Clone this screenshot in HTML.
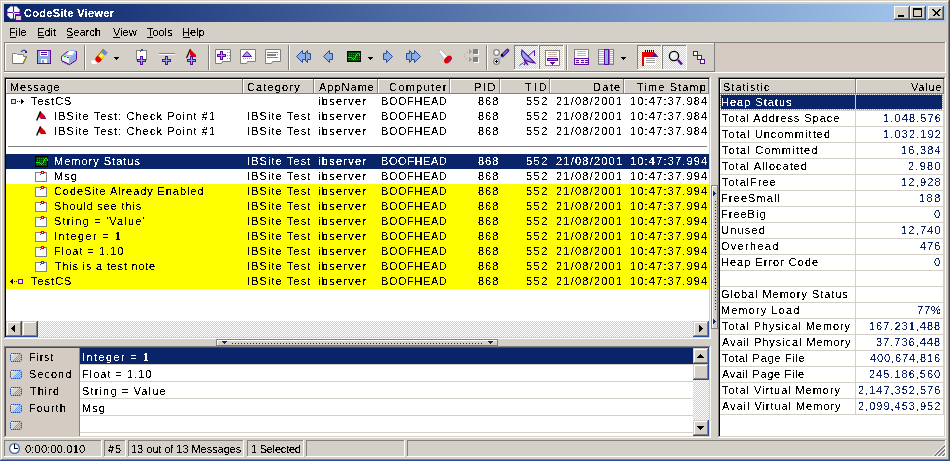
<!DOCTYPE html>
<html><head><meta charset="utf-8"><style>
html,body{margin:0;padding:0}
body{width:950px;height:461px;overflow:hidden;position:relative;background:#D4D0C8;font-family:"Liberation Sans",sans-serif;font-size:11px}
div,svg{position:absolute}
p{position:absolute;margin:0;line-height:15px;white-space:pre;font-family:"Liberation Sans",sans-serif;font-size:11px;color:#000;}
</style></head><body>
<div style="left:1px;top:1px;width:948px;height:1px;background:#fff"></div>
<div style="left:1px;top:1px;width:1px;height:459px;background:#fff"></div>
<div style="left:948px;top:1px;width:1px;height:459px;background:#808080"></div>
<div style="left:1px;top:459px;width:948px;height:1px;background:#808080"></div>
<div style="left:949px;top:0px;width:1px;height:461px;background:#2B4A9A"></div>
<div style="left:0px;top:460px;width:950px;height:1px;background:#2B4A9A"></div>
<div style="left:4px;top:4px;width:942px;height:18px;background:linear-gradient(90deg,#0A246A 0%,#A6CAF0 100%)"></div>
<div style="left:894px;top:6px;width:16px;height:14px;background:#D4D0C8"></div>
<div style="left:894px;top:6px;width:16px;height:1px;background:#fff"></div>
<div style="left:894px;top:6px;width:1px;height:14px;background:#fff"></div>
<div style="left:894px;top:19px;width:16px;height:1px;background:#2B4A9A"></div>
<div style="left:909px;top:6px;width:1px;height:14px;background:#2B4A9A"></div>
<div style="left:895px;top:18px;width:14px;height:1px;background:#808080"></div>
<div style="left:908px;top:7px;width:1px;height:12px;background:#808080"></div>
<div style="left:910px;top:6px;width:16px;height:14px;background:#D4D0C8"></div>
<div style="left:910px;top:6px;width:16px;height:1px;background:#fff"></div>
<div style="left:910px;top:6px;width:1px;height:14px;background:#fff"></div>
<div style="left:910px;top:19px;width:16px;height:1px;background:#2B4A9A"></div>
<div style="left:925px;top:6px;width:1px;height:14px;background:#2B4A9A"></div>
<div style="left:911px;top:18px;width:14px;height:1px;background:#808080"></div>
<div style="left:924px;top:7px;width:1px;height:12px;background:#808080"></div>
<div style="left:928px;top:6px;width:16px;height:14px;background:#D4D0C8"></div>
<div style="left:928px;top:6px;width:16px;height:1px;background:#fff"></div>
<div style="left:928px;top:6px;width:1px;height:14px;background:#fff"></div>
<div style="left:928px;top:19px;width:16px;height:1px;background:#2B4A9A"></div>
<div style="left:943px;top:6px;width:1px;height:14px;background:#2B4A9A"></div>
<div style="left:929px;top:18px;width:14px;height:1px;background:#808080"></div>
<div style="left:942px;top:7px;width:1px;height:12px;background:#808080"></div>

<div style="left:10px;top:37px;width:6px;height:1px;background:#000"></div>
<div style="left:38px;top:37px;width:6px;height:1px;background:#000"></div>
<div style="left:67px;top:37px;width:6px;height:1px;background:#000"></div>
<div style="left:113px;top:37px;width:7px;height:1px;background:#000"></div>
<div style="left:147px;top:37px;width:6px;height:1px;background:#000"></div>
<div style="left:183px;top:37px;width:7px;height:1px;background:#000"></div>
<div style="left:4px;top:42px;width:942px;height:1px;background:#808080"></div>
<div style="left:4px;top:72px;width:942px;height:1px;background:#fff"></div>
<div style="left:945px;top:42px;width:1px;height:31px;background:#fff"></div>
<div style="left:5px;top:43px;width:709px;height:1px;background:#fff"></div>
<div style="left:5px;top:43px;width:1px;height:29px;background:#fff"></div>
<div style="left:4px;top:42px;width:1px;height:30px;background:#808080"></div>
<div style="left:4px;top:71px;width:711px;height:1px;background:#808080"></div>
<div style="left:714px;top:42px;width:1px;height:30px;background:#808080"></div>
<div style="left:715px;top:43px;width:230px;height:29px;background:#D4CAC2"></div>
<div style="left:84px;top:45px;width:1px;height:25px;background:#808080"></div>
<div style="left:85px;top:45px;width:1px;height:25px;background:#fff"></div>
<div style="left:208px;top:45px;width:1px;height:25px;background:#808080"></div>
<div style="left:209px;top:45px;width:1px;height:25px;background:#fff"></div>
<div style="left:288px;top:45px;width:1px;height:25px;background:#808080"></div>
<div style="left:289px;top:45px;width:1px;height:25px;background:#fff"></div>
<div style="left:486px;top:45px;width:1px;height:25px;background:#808080"></div>
<div style="left:487px;top:45px;width:1px;height:25px;background:#fff"></div>
<div style="left:566px;top:45px;width:1px;height:25px;background:#808080"></div>
<div style="left:567px;top:45px;width:1px;height:25px;background:#fff"></div>
<div style="left:515px;top:46px;width:23px;height:23px;background:repeating-conic-gradient(#fff 0 25%,#D4D0C8 0 50%) 0 0/2px 2px"></div>
<div style="left:514px;top:45px;width:25px;height:1px;background:#808080"></div>
<div style="left:514px;top:45px;width:1px;height:25px;background:#808080"></div>
<div style="left:514px;top:69px;width:25px;height:1px;background:#fff"></div>
<div style="left:538px;top:45px;width:1px;height:25px;background:#fff"></div>
<div style="left:540px;top:46px;width:23px;height:23px;background:repeating-conic-gradient(#fff 0 25%,#D4D0C8 0 50%) 0 0/2px 2px"></div>
<div style="left:539px;top:45px;width:25px;height:1px;background:#808080"></div>
<div style="left:539px;top:45px;width:1px;height:25px;background:#808080"></div>
<div style="left:539px;top:69px;width:25px;height:1px;background:#fff"></div>
<div style="left:563px;top:45px;width:1px;height:25px;background:#fff"></div>
<div style="left:638px;top:46px;width:23px;height:23px;background:repeating-conic-gradient(#fff 0 25%,#D4D0C8 0 50%) 0 0/2px 2px"></div>
<div style="left:637px;top:45px;width:25px;height:1px;background:#808080"></div>
<div style="left:637px;top:45px;width:1px;height:25px;background:#808080"></div>
<div style="left:637px;top:69px;width:25px;height:1px;background:#fff"></div>
<div style="left:661px;top:45px;width:1px;height:25px;background:#fff"></div>
<div style="left:663px;top:46px;width:23px;height:23px;background:repeating-conic-gradient(#fff 0 25%,#D4D0C8 0 50%) 0 0/2px 2px"></div>
<div style="left:662px;top:45px;width:25px;height:1px;background:#808080"></div>
<div style="left:662px;top:45px;width:1px;height:25px;background:#808080"></div>
<div style="left:662px;top:69px;width:25px;height:1px;background:#fff"></div>
<div style="left:686px;top:45px;width:1px;height:25px;background:#fff"></div>

<div style="left:4px;top:77px;width:707px;height:1px;background:#808080"></div>
<div style="left:4px;top:77px;width:1px;height:262px;background:#808080"></div>
<div style="left:4px;top:338px;width:707px;height:1px;background:#fff"></div>
<div style="left:710px;top:77px;width:1px;height:262px;background:#fff"></div>
<div style="left:5px;top:78px;width:705px;height:1px;background:#000"></div>
<div style="left:5px;top:78px;width:1px;height:260px;background:#000"></div>
<div style="left:5px;top:337px;width:705px;height:1px;background:#D4D0C8"></div>
<div style="left:709px;top:78px;width:1px;height:260px;background:#D4D0C8"></div>
<div style="left:6px;top:79px;width:703px;height:258px;background:#fff"></div>
<div style="left:6px;top:79px;width:237px;height:15px;background:#D4D0C8"></div>
<div style="left:6px;top:79px;width:237px;height:1px;background:#fff"></div>
<div style="left:6px;top:79px;width:1px;height:15px;background:#fff"></div>
<div style="left:6px;top:93px;width:237px;height:1px;background:#808080"></div>
<div style="left:242px;top:79px;width:1px;height:15px;background:#808080"></div>
<div style="left:243px;top:79px;width:71px;height:15px;background:#D4D0C8"></div>
<div style="left:243px;top:79px;width:71px;height:1px;background:#fff"></div>
<div style="left:243px;top:79px;width:1px;height:15px;background:#fff"></div>
<div style="left:243px;top:93px;width:71px;height:1px;background:#808080"></div>
<div style="left:313px;top:79px;width:1px;height:15px;background:#808080"></div>
<div style="left:314px;top:79px;width:64px;height:15px;background:#D4D0C8"></div>
<div style="left:314px;top:79px;width:64px;height:1px;background:#fff"></div>
<div style="left:314px;top:79px;width:1px;height:15px;background:#fff"></div>
<div style="left:314px;top:93px;width:64px;height:1px;background:#808080"></div>
<div style="left:377px;top:79px;width:1px;height:15px;background:#808080"></div>
<div style="left:378px;top:79px;width:72px;height:15px;background:#D4D0C8"></div>
<div style="left:378px;top:79px;width:72px;height:1px;background:#fff"></div>
<div style="left:378px;top:79px;width:1px;height:15px;background:#fff"></div>
<div style="left:378px;top:93px;width:72px;height:1px;background:#808080"></div>
<div style="left:449px;top:79px;width:1px;height:15px;background:#808080"></div>
<div style="left:450px;top:79px;width:50px;height:15px;background:#D4D0C8"></div>
<div style="left:450px;top:79px;width:50px;height:1px;background:#fff"></div>
<div style="left:450px;top:79px;width:1px;height:15px;background:#fff"></div>
<div style="left:450px;top:93px;width:50px;height:1px;background:#808080"></div>
<div style="left:499px;top:79px;width:1px;height:15px;background:#808080"></div>
<div style="left:500px;top:79px;width:50px;height:15px;background:#D4D0C8"></div>
<div style="left:500px;top:79px;width:50px;height:1px;background:#fff"></div>
<div style="left:500px;top:79px;width:1px;height:15px;background:#fff"></div>
<div style="left:500px;top:93px;width:50px;height:1px;background:#808080"></div>
<div style="left:549px;top:79px;width:1px;height:15px;background:#808080"></div>
<div style="left:550px;top:79px;width:74px;height:15px;background:#D4D0C8"></div>
<div style="left:550px;top:79px;width:74px;height:1px;background:#fff"></div>
<div style="left:550px;top:79px;width:1px;height:15px;background:#fff"></div>
<div style="left:550px;top:93px;width:74px;height:1px;background:#808080"></div>
<div style="left:623px;top:79px;width:1px;height:15px;background:#808080"></div>
<div style="left:624px;top:79px;width:85px;height:15px;background:#D4D0C8"></div>
<div style="left:624px;top:79px;width:85px;height:1px;background:#fff"></div>
<div style="left:624px;top:79px;width:1px;height:15px;background:#fff"></div>
<div style="left:624px;top:93px;width:85px;height:1px;background:#808080"></div>
<div style="left:708px;top:79px;width:1px;height:15px;background:#808080"></div>
<div style="left:6px;top:184px;width:703px;height:105px;background:#FFFF00"></div>
<div style="left:6px;top:154px;width:703px;height:15px;background:#0A246A"></div>
<div style="left:8px;top:146px;width:699px;height:1px;background:#808080"></div>

<div style="left:6px;top:321px;width:703px;height:16px;background:repeating-conic-gradient(#fff 0 25%,#D4D0C8 0 50%) 0 0/2px 2px"></div>
<div style="left:6px;top:321px;width:16px;height:16px;background:#D4D0C8"></div>
<div style="left:6px;top:321px;width:16px;height:1px;background:#D4D0C8"></div>
<div style="left:6px;top:321px;width:1px;height:16px;background:#D4D0C8"></div>
<div style="left:7px;top:322px;width:14px;height:1px;background:#fff"></div>
<div style="left:7px;top:322px;width:1px;height:14px;background:#fff"></div>
<div style="left:6px;top:336px;width:16px;height:1px;background:#2B4A9A"></div>
<div style="left:21px;top:321px;width:1px;height:16px;background:#2B4A9A"></div>
<div style="left:7px;top:335px;width:14px;height:1px;background:#808080"></div>
<div style="left:20px;top:322px;width:1px;height:14px;background:#808080"></div>
<div style="left:22px;top:321px;width:16px;height:16px;background:#D4D0C8"></div>
<div style="left:22px;top:321px;width:16px;height:1px;background:#D4D0C8"></div>
<div style="left:22px;top:321px;width:1px;height:16px;background:#D4D0C8"></div>
<div style="left:23px;top:322px;width:14px;height:1px;background:#fff"></div>
<div style="left:23px;top:322px;width:1px;height:14px;background:#fff"></div>
<div style="left:22px;top:336px;width:16px;height:1px;background:#2B4A9A"></div>
<div style="left:37px;top:321px;width:1px;height:16px;background:#2B4A9A"></div>
<div style="left:23px;top:335px;width:14px;height:1px;background:#808080"></div>
<div style="left:36px;top:322px;width:1px;height:14px;background:#808080"></div>
<div style="left:693px;top:321px;width:16px;height:16px;background:#D4D0C8"></div>
<div style="left:693px;top:321px;width:16px;height:1px;background:#D4D0C8"></div>
<div style="left:693px;top:321px;width:1px;height:16px;background:#D4D0C8"></div>
<div style="left:694px;top:322px;width:14px;height:1px;background:#fff"></div>
<div style="left:694px;top:322px;width:1px;height:14px;background:#fff"></div>
<div style="left:693px;top:336px;width:16px;height:1px;background:#2B4A9A"></div>
<div style="left:708px;top:321px;width:1px;height:16px;background:#2B4A9A"></div>
<div style="left:694px;top:335px;width:14px;height:1px;background:#808080"></div>
<div style="left:707px;top:322px;width:1px;height:14px;background:#808080"></div>

<div style="left:216px;top:339px;width:282px;height:7px;background:#D4D0C8"></div>
<div style="left:216px;top:339px;width:282px;height:1px;background:#808080"></div>
<div style="left:216px;top:339px;width:1px;height:7px;background:#808080"></div>
<div style="left:216px;top:345px;width:282px;height:1px;background:#808080"></div>
<div style="left:497px;top:339px;width:1px;height:7px;background:#808080"></div>
<div style="left:217px;top:340px;width:280px;height:1px;background:#fff"></div>
<div style="left:217px;top:340px;width:1px;height:5px;background:#fff"></div>
<div style="left:711px;top:185px;width:7px;height:144px;background:#D4D0C8"></div>
<div style="left:711px;top:185px;width:7px;height:1px;background:#808080"></div>
<div style="left:711px;top:185px;width:1px;height:144px;background:#808080"></div>
<div style="left:711px;top:328px;width:7px;height:1px;background:#808080"></div>
<div style="left:717px;top:185px;width:1px;height:144px;background:#808080"></div>
<div style="left:712px;top:186px;width:1px;height:142px;background:#fff"></div>
<div style="left:712px;top:186px;width:5px;height:1px;background:#fff"></div>

<div style="left:718px;top:77px;width:228px;height:1px;background:#808080"></div>
<div style="left:718px;top:77px;width:1px;height:361px;background:#808080"></div>
<div style="left:718px;top:437px;width:228px;height:1px;background:#fff"></div>
<div style="left:945px;top:77px;width:1px;height:361px;background:#fff"></div>
<div style="left:719px;top:78px;width:226px;height:1px;background:#000"></div>
<div style="left:719px;top:78px;width:1px;height:359px;background:#000"></div>
<div style="left:719px;top:436px;width:226px;height:1px;background:#D4D0C8"></div>
<div style="left:944px;top:78px;width:1px;height:359px;background:#D4D0C8"></div>
<div style="left:720px;top:79px;width:224px;height:357px;background:#fff"></div>
<div style="left:720px;top:79px;width:136px;height:15px;background:#D4D0C8"></div>
<div style="left:720px;top:79px;width:136px;height:1px;background:#fff"></div>
<div style="left:720px;top:79px;width:1px;height:15px;background:#fff"></div>
<div style="left:720px;top:93px;width:136px;height:1px;background:#808080"></div>
<div style="left:855px;top:79px;width:1px;height:15px;background:#808080"></div>
<div style="left:856px;top:79px;width:88px;height:15px;background:#D4D0C8"></div>
<div style="left:856px;top:79px;width:88px;height:1px;background:#fff"></div>
<div style="left:856px;top:79px;width:1px;height:15px;background:#fff"></div>
<div style="left:856px;top:93px;width:88px;height:1px;background:#808080"></div>
<div style="left:943px;top:79px;width:1px;height:15px;background:#808080"></div>
<div style="left:720px;top:110px;width:224px;height:1px;background:#D4D0C8"></div>
<div style="left:720px;top:126px;width:224px;height:1px;background:#D4D0C8"></div>
<div style="left:720px;top:142px;width:224px;height:1px;background:#D4D0C8"></div>
<div style="left:720px;top:158px;width:224px;height:1px;background:#D4D0C8"></div>
<div style="left:720px;top:174px;width:224px;height:1px;background:#D4D0C8"></div>
<div style="left:720px;top:190px;width:224px;height:1px;background:#D4D0C8"></div>
<div style="left:720px;top:206px;width:224px;height:1px;background:#D4D0C8"></div>
<div style="left:720px;top:222px;width:224px;height:1px;background:#D4D0C8"></div>
<div style="left:720px;top:238px;width:224px;height:1px;background:#D4D0C8"></div>
<div style="left:720px;top:254px;width:224px;height:1px;background:#D4D0C8"></div>
<div style="left:720px;top:270px;width:224px;height:1px;background:#D4D0C8"></div>
<div style="left:720px;top:286px;width:224px;height:1px;background:#D4D0C8"></div>
<div style="left:720px;top:302px;width:224px;height:1px;background:#D4D0C8"></div>
<div style="left:720px;top:318px;width:224px;height:1px;background:#D4D0C8"></div>
<div style="left:720px;top:334px;width:224px;height:1px;background:#D4D0C8"></div>
<div style="left:720px;top:350px;width:224px;height:1px;background:#D4D0C8"></div>
<div style="left:720px;top:366px;width:224px;height:1px;background:#D4D0C8"></div>
<div style="left:720px;top:382px;width:224px;height:1px;background:#D4D0C8"></div>
<div style="left:720px;top:398px;width:224px;height:1px;background:#D4D0C8"></div>
<div style="left:720px;top:414px;width:224px;height:1px;background:#D4D0C8"></div>
<div style="left:855px;top:94px;width:1px;height:321px;background:#D4D0C8"></div>
<div style="left:943px;top:94px;width:1px;height:321px;background:#D4D0C8"></div>
<div style="left:720px;top:94px;width:223px;height:16px;background:#0A246A"></div>
<div style="left:720px;top:94px;width:223px;height:1px;background:repeating-linear-gradient(90deg,#fff 0 1px,transparent 1px 2px)"></div>
<div style="left:720px;top:109px;width:223px;height:1px;background:repeating-linear-gradient(90deg,#fff 0 1px,transparent 1px 2px)"></div>
<div style="left:720px;top:94px;width:1px;height:16px;background:repeating-linear-gradient(180deg,#fff 0 1px,transparent 1px 2px)"></div>
<div style="left:942px;top:94px;width:1px;height:16px;background:repeating-linear-gradient(180deg,#fff 0 1px,transparent 1px 2px)"></div>
<div style="left:855px;top:95px;width:1px;height:14px;background:#D4D0C8"></div>
<div style="left:4px;top:346px;width:707px;height:1px;background:#808080"></div>
<div style="left:4px;top:346px;width:1px;height:92px;background:#808080"></div>
<div style="left:4px;top:437px;width:707px;height:1px;background:#fff"></div>
<div style="left:710px;top:346px;width:1px;height:92px;background:#fff"></div>
<div style="left:5px;top:347px;width:705px;height:1px;background:#2B4A9A"></div>
<div style="left:5px;top:347px;width:1px;height:90px;background:#2B4A9A"></div>
<div style="left:5px;top:436px;width:705px;height:1px;background:#D4D0C8"></div>
<div style="left:709px;top:347px;width:1px;height:90px;background:#D4D0C8"></div>
<div style="left:6px;top:348px;width:703px;height:88px;background:#fff"></div>
<div style="left:6px;top:348px;width:74px;height:88px;background:#D4CBC3"></div>
<div style="left:80px;top:348px;width:613px;height:16px;background:#0A246A"></div>
<div style="left:80px;top:364px;width:613px;height:1px;background:#D4D0C8"></div>
<div style="left:80px;top:381px;width:613px;height:1px;background:#D4D0C8"></div>
<div style="left:80px;top:398px;width:613px;height:1px;background:#D4D0C8"></div>
<div style="left:80px;top:415px;width:613px;height:1px;background:#D4D0C8"></div>
<div style="left:80px;top:432px;width:613px;height:1px;background:#D4D0C8"></div>
<div style="left:79px;top:348px;width:1px;height:88px;background:#8A8480"></div>

<div style="left:693px;top:364px;width:16px;height:56px;background:repeating-conic-gradient(#fff 0 25%,#D4D0C8 0 50%) 0 0/2px 2px"></div>
<div style="left:693px;top:348px;width:16px;height:16px;background:#D4D0C8"></div>
<div style="left:693px;top:348px;width:16px;height:1px;background:#D4D0C8"></div>
<div style="left:693px;top:348px;width:1px;height:16px;background:#D4D0C8"></div>
<div style="left:694px;top:349px;width:14px;height:1px;background:#fff"></div>
<div style="left:694px;top:349px;width:1px;height:14px;background:#fff"></div>
<div style="left:693px;top:363px;width:16px;height:1px;background:#2B4A9A"></div>
<div style="left:708px;top:348px;width:1px;height:16px;background:#2B4A9A"></div>
<div style="left:694px;top:362px;width:14px;height:1px;background:#808080"></div>
<div style="left:707px;top:349px;width:1px;height:14px;background:#808080"></div>
<div style="left:693px;top:364px;width:16px;height:16px;background:#D4D0C8"></div>
<div style="left:693px;top:364px;width:16px;height:1px;background:#D4D0C8"></div>
<div style="left:693px;top:364px;width:1px;height:16px;background:#D4D0C8"></div>
<div style="left:694px;top:365px;width:14px;height:1px;background:#fff"></div>
<div style="left:694px;top:365px;width:1px;height:14px;background:#fff"></div>
<div style="left:693px;top:379px;width:16px;height:1px;background:#2B4A9A"></div>
<div style="left:708px;top:364px;width:1px;height:16px;background:#2B4A9A"></div>
<div style="left:694px;top:378px;width:14px;height:1px;background:#808080"></div>
<div style="left:707px;top:365px;width:1px;height:14px;background:#808080"></div>
<div style="left:693px;top:420px;width:16px;height:16px;background:#D4D0C8"></div>
<div style="left:693px;top:420px;width:16px;height:1px;background:#D4D0C8"></div>
<div style="left:693px;top:420px;width:1px;height:16px;background:#D4D0C8"></div>
<div style="left:694px;top:421px;width:14px;height:1px;background:#fff"></div>
<div style="left:694px;top:421px;width:1px;height:14px;background:#fff"></div>
<div style="left:693px;top:435px;width:16px;height:1px;background:#2B4A9A"></div>
<div style="left:708px;top:420px;width:1px;height:16px;background:#2B4A9A"></div>
<div style="left:694px;top:434px;width:14px;height:1px;background:#808080"></div>
<div style="left:707px;top:421px;width:1px;height:14px;background:#808080"></div>

<div style="left:4px;top:440px;width:98px;height:1px;background:#808080"></div>
<div style="left:4px;top:440px;width:1px;height:17px;background:#808080"></div>
<div style="left:4px;top:456px;width:98px;height:1px;background:#fff"></div>
<div style="left:101px;top:440px;width:1px;height:17px;background:#fff"></div>
<div style="left:104px;top:440px;width:22px;height:1px;background:#808080"></div>
<div style="left:104px;top:440px;width:1px;height:17px;background:#808080"></div>
<div style="left:104px;top:456px;width:22px;height:1px;background:#fff"></div>
<div style="left:125px;top:440px;width:1px;height:17px;background:#fff"></div>
<div style="left:128px;top:440px;width:116px;height:1px;background:#808080"></div>
<div style="left:128px;top:440px;width:1px;height:17px;background:#808080"></div>
<div style="left:128px;top:456px;width:116px;height:1px;background:#fff"></div>
<div style="left:243px;top:440px;width:1px;height:17px;background:#fff"></div>
<div style="left:247px;top:440px;width:57px;height:1px;background:#808080"></div>
<div style="left:247px;top:440px;width:1px;height:17px;background:#808080"></div>
<div style="left:247px;top:456px;width:57px;height:1px;background:#fff"></div>
<div style="left:303px;top:440px;width:1px;height:17px;background:#fff"></div>
<div style="left:306px;top:440px;width:99px;height:1px;background:#808080"></div>
<div style="left:306px;top:440px;width:1px;height:17px;background:#808080"></div>
<div style="left:306px;top:456px;width:99px;height:1px;background:#fff"></div>
<div style="left:404px;top:440px;width:1px;height:17px;background:#fff"></div>
<div style="left:407px;top:440px;width:539px;height:1px;background:#808080"></div>
<div style="left:407px;top:440px;width:1px;height:17px;background:#808080"></div>
<div style="left:407px;top:456px;width:539px;height:1px;background:#fff"></div>
<div style="left:945px;top:440px;width:1px;height:17px;background:#fff"></div>

<svg width="950" height="461" style="left:0;top:0"><path d="M10.5,6.5 h6 l3,3 v6 l-3,3 h-6 l-3,-3 v-6 z" fill="#F4F6FA" stroke="#9DBAE6" stroke-width="1" stroke-dasharray="1.5,1"/><rect x="13" y="5" width="1" height="15" fill="#5A0AA0"/><rect x="6" y="12" width="16" height="1" fill="#5A0AA0"/><rect x="13" y="12" width="1" height="1" fill="#fff"/><rect x="15" y="14" width="7" height="7" fill="#5A0AA0"/><rect x="16" y="16" width="5" height="4" fill="#D8D8C8"/><rect x="898" y="15" width="6" height="2" fill="#000"/><rect x="913" y="8" width="9" height="9" fill="#000"/><rect x="914" y="10" width="7" height="6" fill="#D4D0C8"/><rect x="932" y="9" width="2" height="1" fill="#000"/><rect x="939" y="9" width="2" height="1" fill="#000"/><rect x="933" y="10" width="2" height="1" fill="#000"/><rect x="938" y="10" width="2" height="1" fill="#000"/><rect x="934" y="11" width="2" height="1" fill="#000"/><rect x="937" y="11" width="2" height="1" fill="#000"/><rect x="935" y="12" width="2" height="1" fill="#000"/><rect x="936" y="12" width="2" height="1" fill="#000"/><rect x="936" y="13" width="2" height="1" fill="#000"/><rect x="935" y="13" width="2" height="1" fill="#000"/><rect x="937" y="14" width="2" height="1" fill="#000"/><rect x="934" y="14" width="2" height="1" fill="#000"/><rect x="938" y="15" width="2" height="1" fill="#000"/><rect x="933" y="15" width="2" height="1" fill="#000"/><path d="M12,53 h4 l1,1 h6 v2 h3 l-3,7 h-11 z" fill="#fff" stroke="#808080" stroke-width="1" transform="translate(0.5,0.5)"/><path d="M13,63.5 h10 l3.5,-7" fill="none" stroke="#808000" stroke-width="1.2" /><path d="M21,52 q2,-3 5,-1" fill="none" stroke="#2B4A9A" stroke-width="1.2" /><rect x="25" y="51" width="2" height="2" fill="#5A0AA0"/><rect x="37" y="50" width="14" height="14" fill="#5A0AA0"/><rect x="38" y="51" width="12" height="12" fill="#8FAEE0"/><rect x="40" y="51" width="8" height="5" fill="#fff"/><rect x="41" y="52" width="6" height="1" fill="#5A0AA0"/><rect x="41" y="54" width="6" height="1" fill="#5A0AA0"/><rect x="41" y="59" width="6" height="4" fill="#fff"/><rect x="42" y="60" width="2" height="3" fill="#8FA0C0"/><path d="M61.5,56.5 L67.5,51.5 L76.5,51.5 L76.5,59.5 L69.5,64.5 L61.5,60.5 Z" fill="#C8D8F0" stroke="#5A0AA0" stroke-width="1" /><path d="M62,57 L69,58 L69,63 L62,60 Z" fill="#F4F4F4" stroke="none" stroke-width="1" /><path d="M69,58 L76,53 L76,59 L69,63.5 Z" fill="#8FAEE0" stroke="none" stroke-width="1" /><path d="M65.5,55.5 L69.5,50.5 L75.5,50.5 L72.5,55.5 Z" fill="#fff" stroke="#9DBAE6" stroke-width="1" /><rect x="64" y="56" width="2" height="1" fill="#00C000"/><rect x="67" y="57" width="2" height="1" fill="#E00000"/><path d="M62,61.5 L69,65 L77,60" fill="none" stroke="#5A0AA0" stroke-width="1" stroke-dasharray="1.5,1"/><path d="M91,61 l3,-1 l2,2 l1,2 h-5 z" fill="#fff" stroke="none" stroke-width="1" /><g transform="rotate(-50 101 56)"><rect x="94" y="53" width="9" height="6" rx="2.5" fill="#E00000"/><rect x="99" y="53" width="5" height="6" fill="#F0E000"/><rect x="100" y="54" width="3" height="1" fill="#fff"/><rect x="100" y="56" width="3" height="1" fill="#fff"/><rect x="104" y="53" width="4" height="6" fill="#6A8AD8"/><rect x="99" y="53" width="9" height="1" fill="#A08000"/></g><rect x="114" y="57" width="5" height="1" fill="#000"/><rect x="115" y="58" width="3" height="1" fill="#000"/><rect x="116" y="59" width="1" height="1" fill="#000"/><rect x="136" y="50" width="11" height="10" fill="#808080"/><rect x="137" y="51" width="9" height="9" fill="#fff"/><rect x="141" y="49" width="2" height="2" fill="#2B4A9A"/><rect x="140" y="51" width="1" height="1" fill="#2B4A9A"/><rect x="140" y="56" width="3" height="9" fill="#5A0AA0"/><rect x="137" y="59" width="9" height="3" fill="#5A0AA0"/><rect x="141" y="57" width="1" height="7" fill="#8FAEE0"/><rect x="138" y="60" width="7" height="1" fill="#8FAEE0"/><rect x="159" y="53" width="16" height="1" fill="#808080"/><rect x="159" y="54" width="16" height="1" fill="#fff"/><rect x="165" y="56" width="3" height="9" fill="#5A0AA0"/><rect x="162" y="59" width="9" height="3" fill="#5A0AA0"/><rect x="166" y="57" width="1" height="7" fill="#8FAEE0"/><rect x="163" y="60" width="7" height="1" fill="#8FAEE0"/><path d="M186.5,58 L190.5,49" fill="none" stroke="#000" stroke-width="1.2" /><path d="M190,49 l6,6 l0,2 l-4,0 l-2,-2 z" fill="#E00000" stroke="none" stroke-width="1" /><rect x="190" y="56" width="3" height="9" fill="#5A0AA0"/><rect x="187" y="59" width="9" height="3" fill="#5A0AA0"/><rect x="191" y="57" width="1" height="7" fill="#8FAEE0"/><rect x="188" y="60" width="7" height="1" fill="#8FAEE0"/><path d="M215,49 h15 v12 h-8 l-1,2 h-6 z" fill="#fff" stroke="#808080" stroke-width="1" transform="translate(0.5,0.5)"/><path d="M240,49 h15 v12 h-8 l-1,2 h-6 z" fill="#fff" stroke="#808080" stroke-width="1" transform="translate(0.5,0.5)"/><path d="M265,49 h15 v12 h-8 l-1,2 h-6 z" fill="#fff" stroke="#808080" stroke-width="1" transform="translate(0.5,0.5)"/><rect x="227" y="52" width="1" height="1" fill="#A0A0A0"/><rect x="227" y="55" width="1" height="1" fill="#A0A0A0"/><rect x="227" y="58" width="1" height="1" fill="#A0A0A0"/><rect x="229" y="52" width="1" height="1" fill="#A0A0A0"/><rect x="229" y="55" width="1" height="1" fill="#A0A0A0"/><rect x="229" y="58" width="1" height="1" fill="#A0A0A0"/><rect x="220" y="51" width="3" height="9" fill="#5A0AA0"/><rect x="217" y="54" width="9" height="3" fill="#5A0AA0"/><rect x="221" y="52" width="1" height="7" fill="#8FAEE0"/><rect x="218" y="55" width="7" height="1" fill="#8FAEE0"/><path d="M242.5,56.5 l4.5,-5 l4.5,5 z" fill="#8FAEE0" stroke="#5A0AA0" stroke-width="1" /><rect x="243" y="58" width="1" height="1" fill="#A0A0A0"/><rect x="245" y="58" width="1" height="1" fill="#A0A0A0"/><rect x="247" y="58" width="1" height="1" fill="#A0A0A0"/><rect x="249" y="58" width="1" height="1" fill="#A0A0A0"/><rect x="251" y="58" width="1" height="1" fill="#A0A0A0"/><rect x="267" y="52" width="11" height="1" fill="#808080"/><rect x="267" y="54" width="9" height="2" fill="#808080"/><rect x="277" y="54" width="1" height="1" fill="#808080"/><rect x="267" y="57" width="11" height="1" fill="#808080"/><path d="M301,56 l6,-6 v3 h3 v6 h-3 v3 z" fill="#8FAEE0" stroke="#2B4A9A" stroke-width="1" transform="translate(0.5,0.5)"/><path d="M296,56 l6,-6 v3 h3 v6 h-3 v3 z" fill="#8FAEE0" stroke="#2B4A9A" stroke-width="1" transform="translate(0.5,0.5)"/><path d="M323,56 l6,-6 v3 h3 v6 h-3 v3 z" fill="#8FAEE0" stroke="#2B4A9A" stroke-width="1" transform="translate(0.5,0.5)"/><path d="M392,56 l-6,-6 v3 h-3 v6 h3 v3 z" fill="#8FAEE0" stroke="#2B4A9A" stroke-width="1" transform="translate(0.5,0.5)"/><path d="M415,56 l-6,-6 v3 h-3 v6 h3 v3 z" fill="#8FAEE0" stroke="#2B4A9A" stroke-width="1" transform="translate(0.5,0.5)"/><path d="M420,56 l-6,-6 v3 h-3 v6 h3 v3 z" fill="#8FAEE0" stroke="#2B4A9A" stroke-width="1" transform="translate(0.5,0.5)"/><rect x="347" y="51" width="14" height="11" fill="#000"/><rect x="348" y="52" width="12" height="9" fill="#004800"/><rect x="349" y="53" width="1" height="1" fill="#00B000"/><rect x="349" y="55" width="1" height="1" fill="#00B000"/><rect x="349" y="57" width="1" height="1" fill="#00B000"/><rect x="349" y="59" width="1" height="1" fill="#00B000"/><rect x="351" y="53" width="1" height="1" fill="#00B000"/><rect x="351" y="55" width="1" height="1" fill="#00B000"/><rect x="351" y="57" width="1" height="1" fill="#00B000"/><rect x="351" y="59" width="1" height="1" fill="#00B000"/><rect x="353" y="53" width="1" height="1" fill="#00B000"/><rect x="353" y="55" width="1" height="1" fill="#00B000"/><rect x="353" y="57" width="1" height="1" fill="#00B000"/><rect x="353" y="59" width="1" height="1" fill="#00B000"/><rect x="355" y="53" width="1" height="1" fill="#00B000"/><rect x="355" y="55" width="1" height="1" fill="#00B000"/><rect x="355" y="57" width="1" height="1" fill="#00B000"/><rect x="355" y="59" width="1" height="1" fill="#00B000"/><rect x="357" y="53" width="1" height="1" fill="#00B000"/><rect x="357" y="55" width="1" height="1" fill="#00B000"/><rect x="357" y="57" width="1" height="1" fill="#00B000"/><rect x="357" y="59" width="1" height="1" fill="#00B000"/><rect x="359" y="53" width="1" height="1" fill="#00B000"/><rect x="359" y="55" width="1" height="1" fill="#00B000"/><rect x="359" y="57" width="1" height="1" fill="#00B000"/><rect x="359" y="59" width="1" height="1" fill="#00B000"/><rect x="348" y="57" width="1" height="1" fill="#00FF00"/><rect x="349" y="57" width="1" height="1" fill="#00FF00"/><rect x="350" y="57" width="1" height="1" fill="#00FF00"/><rect x="351" y="57" width="1" height="1" fill="#00FF00"/><rect x="352" y="58" width="1" height="1" fill="#00FF00"/><rect x="353" y="59" width="1" height="1" fill="#00FF00"/><rect x="354" y="58" width="1" height="1" fill="#00FF00"/><rect x="355" y="57" width="1" height="1" fill="#00FF00"/><rect x="355" y="56" width="1" height="1" fill="#00FF00"/><rect x="356" y="55" width="1" height="1" fill="#00FF00"/><rect x="356" y="54" width="1" height="1" fill="#00FF00"/><rect x="357" y="53" width="1" height="1" fill="#00FF00"/><rect x="358" y="53" width="1" height="1" fill="#00FF00"/><rect x="359" y="54" width="1" height="1" fill="#00FF00"/><rect x="359" y="55" width="1" height="1" fill="#00FF00"/><rect x="368" y="57" width="5" height="1" fill="#000"/><rect x="369" y="58" width="3" height="1" fill="#000"/><rect x="370" y="59" width="1" height="1" fill="#000"/><path d="M438.5,51.5 l2,-2 l7,7 l-3,3 z" fill="#fff" stroke="#9DBAE6" stroke-width="1" /><ellipse cx="448" cy="59.5" rx="4.5" ry="3" transform="rotate(-45 448 59.5)" fill="#E00000"/><ellipse cx="449" cy="60" rx="2" ry="1" transform="rotate(-45 449 60)" fill="#6030B0"/><rect x="449" y="55" width="2" height="1" fill="#F0A000"/><rect x="473" y="49" width="5" height="5" fill="#808080"/><rect x="473" y="57" width="5" height="5" fill="#808080"/><rect x="474" y="54" width="4" height="1" fill="#fff"/><rect x="478" y="50" width="1" height="5" fill="#fff"/><rect x="474" y="62" width="4" height="1" fill="#fff"/><rect x="478" y="58" width="1" height="5" fill="#fff"/><rect x="469" y="49" width="1" height="5" fill="#A0A0A0"/><rect x="470" y="50" width="1" height="3" fill="#A0A0A0"/><rect x="471" y="51" width="1" height="1" fill="#A0A0A0"/><rect x="469" y="57" width="1" height="5" fill="#A0A0A0"/><rect x="470" y="58" width="1" height="3" fill="#A0A0A0"/><rect x="471" y="59" width="1" height="1" fill="#A0A0A0"/><path d="M468,51.5 q-7,4.5 0,9" fill="none" stroke="#A0A0A0" stroke-width="1" stroke-dasharray="1,1"/><circle cx="496.5" cy="52.5" r="2.8" fill="#fff" stroke="#808080" stroke-width="1.2"/><circle cx="496.5" cy="61.5" r="2.8" fill="#fff" stroke="#808080" stroke-width="1.2"/><rect x="495" y="61" width="3" height="1" fill="#000"/><rect x="496" y="60" width="1" height="3" fill="#000"/><path d="M502.5,55.5 L507.5,50.5" fill="none" stroke="#5A0AA0" stroke-width="3.6" stroke-linecap="round"/><path d="M503,55 L507.5,50.5" fill="none" stroke="#5A7CC8" stroke-width="1.6" /><rect x="501" y="54" width="2" height="2" fill="#000"/><path d="M500.5,57 l-3,4 M501.5,57.5 l-3,3" fill="none" stroke="#8FAEE0" stroke-width="0.8" /><path d="M522,50 Q519,61 535,63 Z" fill="#8FAEE0" stroke="#5A0AA0" stroke-width="1.1" /><path d="M528,56 L534.5,50.5 L534.5,56" fill="none" stroke="#5A0AA0" stroke-width="1" /><path d="M524,60 l4,5 M526,61 l-2,4" fill="none" stroke="#5A0AA0" stroke-width="1.4" /><path d="M519.5,65.5 l4,-3" fill="none" stroke="#2B4A9A" stroke-width="1" /><rect x="545" y="50" width="15" height="16" fill="#808080"/><rect x="546" y="51" width="13" height="14" fill="#fff"/><rect x="548" y="52" width="9" height="1" fill="#C8B8A8"/><rect x="548" y="54" width="9" height="1" fill="#C8B8A8"/><rect x="548" y="56" width="9" height="1" fill="#C8B8A8"/><rect x="547" y="58" width="11" height="3" fill="#5A0AA0"/><rect x="548" y="59" width="9" height="1" fill="#8FAEE0"/><rect x="550" y="62" width="5" height="1" fill="#5A0AA0"/><rect x="551" y="63" width="3" height="1" fill="#5A0AA0"/><rect x="552" y="64" width="1" height="1" fill="#5A0AA0"/><rect x="574" y="49" width="15" height="10" fill="#808080"/><rect x="575" y="50" width="13" height="8" fill="#fff"/><rect x="577" y="51" width="9" height="1" fill="#C8B8A8"/><rect x="577" y="53" width="9" height="1" fill="#C8B8A8"/><rect x="577" y="55" width="9" height="1" fill="#C8B8A8"/><rect x="574" y="58" width="15" height="7" fill="#5A0AA0"/><rect x="575" y="59" width="13" height="5" fill="#E8E8F0"/><rect x="576" y="60" width="3" height="1" fill="#5A0AA0"/><rect x="576" y="62" width="3" height="1" fill="#5A0AA0"/><rect x="581" y="60" width="3" height="1" fill="#5A0AA0"/><rect x="581" y="62" width="3" height="1" fill="#5A0AA0"/><rect x="585" y="60" width="3" height="1" fill="#5A0AA0"/><rect x="585" y="62" width="3" height="1" fill="#5A0AA0"/><rect x="598" y="49" width="16" height="16" fill="#808080"/><rect x="599" y="50" width="14" height="14" fill="#fff"/><rect x="599" y="51" width="14" height="1" fill="#C8B8A8"/><rect x="599" y="53" width="14" height="1" fill="#C8B8A8"/><rect x="599" y="55" width="14" height="1" fill="#C8B8A8"/><rect x="599" y="57" width="14" height="1" fill="#C8B8A8"/><rect x="599" y="59" width="14" height="1" fill="#C8B8A8"/><rect x="599" y="61" width="14" height="1" fill="#C8B8A8"/><rect x="599" y="63" width="14" height="1" fill="#C8B8A8"/><rect x="604" y="49" width="5" height="16" fill="#5A0AA0"/><rect x="605" y="50" width="3" height="14" fill="#8FAEE0"/><rect x="609" y="50" width="1" height="14" fill="#808080"/><rect x="621" y="57" width="5" height="1" fill="#000"/><rect x="622" y="58" width="3" height="1" fill="#000"/><rect x="623" y="59" width="1" height="1" fill="#000"/><rect x="642" y="52" width="2" height="14" fill="#E00000"/><rect x="644" y="56" width="12" height="9" fill="#fff"/><rect x="646" y="58" width="9" height="1" fill="#A0A0A0"/><rect x="646" y="60" width="9" height="1" fill="#A0A0A0"/><rect x="646" y="62" width="9" height="1" fill="#A0A0A0"/><path d="M643,52 h11 l4,5 h-14 z" fill="#E00000" stroke="none" stroke-width="1" /><path d="M651,57 l4,-4 l3,4 z" fill="#5A0AA0" stroke="none" stroke-width="1" /><rect x="645" y="50" width="1" height="2" fill="#000"/><rect x="647" y="50" width="1" height="2" fill="#000"/><rect x="649" y="50" width="1" height="2" fill="#000"/><rect x="651" y="50" width="1" height="2" fill="#000"/><rect x="653" y="50" width="1" height="2" fill="#000"/><circle cx="674" cy="56" r="4.6" fill="#E8E8E8" stroke="#000" stroke-width="1.3"/><path d="M671.5,57 L674.5,53.5" fill="none" stroke="#fff" stroke-width="1.2" /><path d="M678,60 L682,64.5" fill="none" stroke="#5A0AA0" stroke-width="2.6" /><rect x="693.5" y="51.5" width="4" height="4" fill="#fff" stroke="#5A0AA0" stroke-width="1"/><rect x="697.5" y="55.5" width="4" height="4" fill="#fff" stroke="#5A0AA0" stroke-width="1"/><rect x="700.5" y="59.5" width="4" height="4" fill="#fff" stroke="#5A0AA0" stroke-width="1"/><rect x="11.5" y="99.5" width="4" height="4" fill="#E8E8E0" stroke="#5A0AA0" stroke-width="1"/><rect x="17" y="101" width="1" height="1" fill="#000"/><rect x="19" y="101" width="1" height="1" fill="#000"/><rect x="21" y="99" width="1" height="5" fill="#000"/><rect x="22" y="100" width="1" height="3" fill="#000"/><rect x="23" y="101" width="1" height="1" fill="#000"/><rect x="10" y="281" width="1" height="1" fill="#000"/><rect x="11" y="280" width="1" height="3" fill="#000"/><rect x="12" y="279" width="1" height="5" fill="#000"/><rect x="14" y="281" width="1" height="1" fill="#000"/><rect x="16" y="281" width="1" height="1" fill="#000"/><rect x="18.5" y="279.5" width="4" height="4" fill="#E8E8E0" stroke="#5A0AA0" stroke-width="1"/><path d="M40,111 l5,5 l1,3 h-5 l-2,-2 z" fill="#E00000" stroke="none" stroke-width="1" /><rect x="44" y="116" width="1" height="1" fill="#5A0AA0"/><rect x="42" y="118" width="1" height="1" fill="#5A0AA0"/><rect x="45" y="118" width="1" height="1" fill="#5A0AA0"/><path d="M36.7,120.5 L40.5,111.5" fill="none" stroke="#000" stroke-width="1.4" /><path d="M40,126 l5,5 l1,3 h-5 l-2,-2 z" fill="#E00000" stroke="none" stroke-width="1" /><rect x="44" y="131" width="1" height="1" fill="#5A0AA0"/><rect x="42" y="133" width="1" height="1" fill="#5A0AA0"/><rect x="45" y="133" width="1" height="1" fill="#5A0AA0"/><path d="M36.7,135.5 L40.5,126.5" fill="none" stroke="#000" stroke-width="1.4" /><rect x="35" y="156" width="13" height="11" fill="#000"/><rect x="36" y="157" width="11" height="9" fill="#004800"/><rect x="37" y="158" width="1" height="1" fill="#00B000"/><rect x="37" y="160" width="1" height="1" fill="#00B000"/><rect x="37" y="162" width="1" height="1" fill="#00B000"/><rect x="37" y="164" width="1" height="1" fill="#00B000"/><rect x="39" y="158" width="1" height="1" fill="#00B000"/><rect x="39" y="160" width="1" height="1" fill="#00B000"/><rect x="39" y="162" width="1" height="1" fill="#00B000"/><rect x="39" y="164" width="1" height="1" fill="#00B000"/><rect x="41" y="158" width="1" height="1" fill="#00B000"/><rect x="41" y="160" width="1" height="1" fill="#00B000"/><rect x="41" y="162" width="1" height="1" fill="#00B000"/><rect x="41" y="164" width="1" height="1" fill="#00B000"/><rect x="43" y="158" width="1" height="1" fill="#00B000"/><rect x="43" y="160" width="1" height="1" fill="#00B000"/><rect x="43" y="162" width="1" height="1" fill="#00B000"/><rect x="43" y="164" width="1" height="1" fill="#00B000"/><rect x="45" y="158" width="1" height="1" fill="#00B000"/><rect x="45" y="160" width="1" height="1" fill="#00B000"/><rect x="45" y="162" width="1" height="1" fill="#00B000"/><rect x="45" y="164" width="1" height="1" fill="#00B000"/><rect x="36" y="162" width="1" height="1" fill="#00FF00"/><rect x="37" y="162" width="1" height="1" fill="#00FF00"/><rect x="38" y="162" width="1" height="1" fill="#00FF00"/><rect x="39" y="162" width="1" height="1" fill="#00FF00"/><rect x="40" y="163" width="1" height="1" fill="#00FF00"/><rect x="41" y="164" width="1" height="1" fill="#00FF00"/><rect x="42" y="163" width="1" height="1" fill="#00FF00"/><rect x="43" y="162" width="1" height="1" fill="#00FF00"/><rect x="43" y="161" width="1" height="1" fill="#00FF00"/><rect x="44" y="160" width="1" height="1" fill="#00FF00"/><rect x="44" y="159" width="1" height="1" fill="#00FF00"/><rect x="45" y="158" width="1" height="1" fill="#00FF00"/><rect x="46" y="158" width="1" height="1" fill="#00FF00"/><rect x="47" y="159" width="1" height="1" fill="#00FF00"/><rect x="47" y="160" width="1" height="1" fill="#00FF00"/><rect x="35" y="172" width="12" height="10" fill="#808080"/><rect x="36" y="173" width="10" height="8" fill="#fff"/><rect x="41" y="171" width="3" height="3" fill="#E00000"/><rect x="40" y="172" width="5" height="1" fill="#E00000"/><rect x="42" y="172" width="1" height="1" fill="#fff"/><rect x="40" y="174" width="1" height="1" fill="#2B4A9A"/><rect x="35" y="187" width="12" height="10" fill="#808080"/><rect x="36" y="188" width="10" height="8" fill="#fff"/><rect x="41" y="186" width="3" height="3" fill="#E00000"/><rect x="40" y="187" width="5" height="1" fill="#E00000"/><rect x="42" y="187" width="1" height="1" fill="#fff"/><rect x="40" y="189" width="1" height="1" fill="#2B4A9A"/><rect x="35" y="202" width="12" height="10" fill="#808080"/><rect x="36" y="203" width="10" height="8" fill="#fff"/><rect x="41" y="201" width="3" height="3" fill="#E00000"/><rect x="40" y="202" width="5" height="1" fill="#E00000"/><rect x="42" y="202" width="1" height="1" fill="#fff"/><rect x="40" y="204" width="1" height="1" fill="#2B4A9A"/><rect x="35" y="217" width="12" height="10" fill="#808080"/><rect x="36" y="218" width="10" height="8" fill="#fff"/><rect x="41" y="216" width="3" height="3" fill="#E00000"/><rect x="40" y="217" width="5" height="1" fill="#E00000"/><rect x="42" y="217" width="1" height="1" fill="#fff"/><rect x="40" y="219" width="1" height="1" fill="#2B4A9A"/><rect x="35" y="232" width="12" height="10" fill="#808080"/><rect x="36" y="233" width="10" height="8" fill="#fff"/><rect x="41" y="231" width="3" height="3" fill="#E00000"/><rect x="40" y="232" width="5" height="1" fill="#E00000"/><rect x="42" y="232" width="1" height="1" fill="#fff"/><rect x="40" y="234" width="1" height="1" fill="#2B4A9A"/><rect x="35" y="247" width="12" height="10" fill="#808080"/><rect x="36" y="248" width="10" height="8" fill="#fff"/><rect x="41" y="246" width="3" height="3" fill="#E00000"/><rect x="40" y="247" width="5" height="1" fill="#E00000"/><rect x="42" y="247" width="1" height="1" fill="#fff"/><rect x="40" y="249" width="1" height="1" fill="#2B4A9A"/><rect x="35" y="262" width="12" height="10" fill="#808080"/><rect x="36" y="263" width="10" height="8" fill="#fff"/><rect x="41" y="261" width="3" height="3" fill="#2B4A9A"/><rect x="40" y="262" width="5" height="1" fill="#2B4A9A"/><rect x="42" y="262" width="1" height="1" fill="#fff"/><rect x="40" y="264" width="1" height="1" fill="#2B4A9A"/><rect x="11" y="328" width="1" height="1" fill="#000"/><rect x="12" y="327" width="1" height="3" fill="#000"/><rect x="13" y="326" width="1" height="5" fill="#000"/><rect x="14" y="325" width="1" height="7" fill="#000"/><rect x="699" y="325" width="1" height="7" fill="#000"/><rect x="700" y="326" width="1" height="5" fill="#000"/><rect x="701" y="327" width="1" height="3" fill="#000"/><rect x="702" y="328" width="1" height="1" fill="#000"/><rect x="700" y="354" width="1" height="1" fill="#000"/><rect x="699" y="355" width="3" height="1" fill="#000"/><rect x="698" y="356" width="5" height="1" fill="#000"/><rect x="697" y="357" width="7" height="1" fill="#000"/><rect x="697" y="426" width="7" height="1" fill="#000"/><rect x="698" y="427" width="5" height="1" fill="#000"/><rect x="699" y="428" width="3" height="1" fill="#000"/><rect x="700" y="429" width="1" height="1" fill="#000"/><rect x="222" y="341" width="5" height="1" fill="#0A246A"/><rect x="223" y="342" width="3" height="1" fill="#0A246A"/><rect x="224" y="343" width="1" height="1" fill="#0A246A"/><rect x="488" y="341" width="5" height="1" fill="#0A246A"/><rect x="489" y="342" width="3" height="1" fill="#0A246A"/><rect x="490" y="343" width="1" height="1" fill="#0A246A"/><rect x="232" y="343" width="1" height="1" fill="#0A246A"/><rect x="235" y="343" width="1" height="1" fill="#0A246A"/><rect x="238" y="343" width="1" height="1" fill="#0A246A"/><rect x="241" y="343" width="1" height="1" fill="#0A246A"/><rect x="244" y="343" width="1" height="1" fill="#0A246A"/><rect x="247" y="343" width="1" height="1" fill="#0A246A"/><rect x="250" y="343" width="1" height="1" fill="#0A246A"/><rect x="253" y="343" width="1" height="1" fill="#0A246A"/><rect x="256" y="343" width="1" height="1" fill="#0A246A"/><rect x="259" y="343" width="1" height="1" fill="#0A246A"/><rect x="262" y="343" width="1" height="1" fill="#0A246A"/><rect x="265" y="343" width="1" height="1" fill="#0A246A"/><rect x="268" y="343" width="1" height="1" fill="#0A246A"/><rect x="271" y="343" width="1" height="1" fill="#0A246A"/><rect x="274" y="343" width="1" height="1" fill="#0A246A"/><rect x="277" y="343" width="1" height="1" fill="#0A246A"/><rect x="280" y="343" width="1" height="1" fill="#0A246A"/><rect x="283" y="343" width="1" height="1" fill="#0A246A"/><rect x="286" y="343" width="1" height="1" fill="#0A246A"/><rect x="289" y="343" width="1" height="1" fill="#0A246A"/><rect x="292" y="343" width="1" height="1" fill="#0A246A"/><rect x="295" y="343" width="1" height="1" fill="#0A246A"/><rect x="298" y="343" width="1" height="1" fill="#0A246A"/><rect x="301" y="343" width="1" height="1" fill="#0A246A"/><rect x="304" y="343" width="1" height="1" fill="#0A246A"/><rect x="307" y="343" width="1" height="1" fill="#0A246A"/><rect x="310" y="343" width="1" height="1" fill="#0A246A"/><rect x="313" y="343" width="1" height="1" fill="#0A246A"/><rect x="316" y="343" width="1" height="1" fill="#0A246A"/><rect x="319" y="343" width="1" height="1" fill="#0A246A"/><rect x="322" y="343" width="1" height="1" fill="#0A246A"/><rect x="325" y="343" width="1" height="1" fill="#0A246A"/><rect x="328" y="343" width="1" height="1" fill="#0A246A"/><rect x="331" y="343" width="1" height="1" fill="#0A246A"/><rect x="334" y="343" width="1" height="1" fill="#0A246A"/><rect x="337" y="343" width="1" height="1" fill="#0A246A"/><rect x="340" y="343" width="1" height="1" fill="#0A246A"/><rect x="343" y="343" width="1" height="1" fill="#0A246A"/><rect x="346" y="343" width="1" height="1" fill="#0A246A"/><rect x="349" y="343" width="1" height="1" fill="#0A246A"/><rect x="352" y="343" width="1" height="1" fill="#0A246A"/><rect x="355" y="343" width="1" height="1" fill="#0A246A"/><rect x="358" y="343" width="1" height="1" fill="#0A246A"/><rect x="361" y="343" width="1" height="1" fill="#0A246A"/><rect x="364" y="343" width="1" height="1" fill="#0A246A"/><rect x="367" y="343" width="1" height="1" fill="#0A246A"/><rect x="370" y="343" width="1" height="1" fill="#0A246A"/><rect x="373" y="343" width="1" height="1" fill="#0A246A"/><rect x="376" y="343" width="1" height="1" fill="#0A246A"/><rect x="379" y="343" width="1" height="1" fill="#0A246A"/><rect x="382" y="343" width="1" height="1" fill="#0A246A"/><rect x="385" y="343" width="1" height="1" fill="#0A246A"/><rect x="388" y="343" width="1" height="1" fill="#0A246A"/><rect x="391" y="343" width="1" height="1" fill="#0A246A"/><rect x="394" y="343" width="1" height="1" fill="#0A246A"/><rect x="397" y="343" width="1" height="1" fill="#0A246A"/><rect x="400" y="343" width="1" height="1" fill="#0A246A"/><rect x="403" y="343" width="1" height="1" fill="#0A246A"/><rect x="406" y="343" width="1" height="1" fill="#0A246A"/><rect x="409" y="343" width="1" height="1" fill="#0A246A"/><rect x="412" y="343" width="1" height="1" fill="#0A246A"/><rect x="415" y="343" width="1" height="1" fill="#0A246A"/><rect x="418" y="343" width="1" height="1" fill="#0A246A"/><rect x="421" y="343" width="1" height="1" fill="#0A246A"/><rect x="424" y="343" width="1" height="1" fill="#0A246A"/><rect x="427" y="343" width="1" height="1" fill="#0A246A"/><rect x="430" y="343" width="1" height="1" fill="#0A246A"/><rect x="433" y="343" width="1" height="1" fill="#0A246A"/><rect x="436" y="343" width="1" height="1" fill="#0A246A"/><rect x="439" y="343" width="1" height="1" fill="#0A246A"/><rect x="442" y="343" width="1" height="1" fill="#0A246A"/><rect x="445" y="343" width="1" height="1" fill="#0A246A"/><rect x="448" y="343" width="1" height="1" fill="#0A246A"/><rect x="451" y="343" width="1" height="1" fill="#0A246A"/><rect x="454" y="343" width="1" height="1" fill="#0A246A"/><rect x="457" y="343" width="1" height="1" fill="#0A246A"/><rect x="460" y="343" width="1" height="1" fill="#0A246A"/><rect x="463" y="343" width="1" height="1" fill="#0A246A"/><rect x="466" y="343" width="1" height="1" fill="#0A246A"/><rect x="469" y="343" width="1" height="1" fill="#0A246A"/><rect x="472" y="343" width="1" height="1" fill="#0A246A"/><rect x="475" y="343" width="1" height="1" fill="#0A246A"/><rect x="478" y="343" width="1" height="1" fill="#0A246A"/><rect x="481" y="343" width="1" height="1" fill="#0A246A"/><rect x="713" y="191" width="1" height="5" fill="#0A246A"/><rect x="714" y="192" width="1" height="3" fill="#0A246A"/><rect x="715" y="193" width="1" height="1" fill="#0A246A"/><rect x="713" y="319" width="1" height="5" fill="#0A246A"/><rect x="714" y="320" width="1" height="3" fill="#0A246A"/><rect x="715" y="321" width="1" height="1" fill="#0A246A"/><rect x="715" y="201" width="1" height="1" fill="#0A246A"/><rect x="715" y="204" width="1" height="1" fill="#0A246A"/><rect x="715" y="207" width="1" height="1" fill="#0A246A"/><rect x="715" y="210" width="1" height="1" fill="#0A246A"/><rect x="715" y="213" width="1" height="1" fill="#0A246A"/><rect x="715" y="216" width="1" height="1" fill="#0A246A"/><rect x="715" y="219" width="1" height="1" fill="#0A246A"/><rect x="715" y="222" width="1" height="1" fill="#0A246A"/><rect x="715" y="225" width="1" height="1" fill="#0A246A"/><rect x="715" y="228" width="1" height="1" fill="#0A246A"/><rect x="715" y="231" width="1" height="1" fill="#0A246A"/><rect x="715" y="234" width="1" height="1" fill="#0A246A"/><rect x="715" y="237" width="1" height="1" fill="#0A246A"/><rect x="715" y="240" width="1" height="1" fill="#0A246A"/><rect x="715" y="243" width="1" height="1" fill="#0A246A"/><rect x="715" y="246" width="1" height="1" fill="#0A246A"/><rect x="715" y="249" width="1" height="1" fill="#0A246A"/><rect x="715" y="252" width="1" height="1" fill="#0A246A"/><rect x="715" y="255" width="1" height="1" fill="#0A246A"/><rect x="715" y="258" width="1" height="1" fill="#0A246A"/><rect x="715" y="261" width="1" height="1" fill="#0A246A"/><rect x="715" y="264" width="1" height="1" fill="#0A246A"/><rect x="715" y="267" width="1" height="1" fill="#0A246A"/><rect x="715" y="270" width="1" height="1" fill="#0A246A"/><rect x="715" y="273" width="1" height="1" fill="#0A246A"/><rect x="715" y="276" width="1" height="1" fill="#0A246A"/><rect x="715" y="279" width="1" height="1" fill="#0A246A"/><rect x="715" y="282" width="1" height="1" fill="#0A246A"/><rect x="715" y="285" width="1" height="1" fill="#0A246A"/><rect x="715" y="288" width="1" height="1" fill="#0A246A"/><rect x="715" y="291" width="1" height="1" fill="#0A246A"/><rect x="715" y="294" width="1" height="1" fill="#0A246A"/><rect x="715" y="297" width="1" height="1" fill="#0A246A"/><rect x="715" y="300" width="1" height="1" fill="#0A246A"/><rect x="715" y="303" width="1" height="1" fill="#0A246A"/><rect x="715" y="306" width="1" height="1" fill="#0A246A"/><rect x="715" y="309" width="1" height="1" fill="#0A246A"/><rect x="720.5" y="94.5" width="222" height="15" fill="none" stroke="#fff" stroke-width="1" stroke-dasharray="1,1"/><rect x="11" y="354" width="10" height="7" fill="#DAD6CE"/><rect x="11" y="353" width="1" height="1" fill="#505050"/><rect x="11" y="361" width="1" height="1" fill="#505050"/><rect x="12" y="353" width="1" height="1" fill="#6A98E8"/><rect x="12" y="361" width="1" height="1" fill="#6A98E8"/><rect x="13" y="353" width="1" height="1" fill="#505050"/><rect x="13" y="361" width="1" height="1" fill="#505050"/><rect x="14" y="353" width="1" height="1" fill="#6A98E8"/><rect x="14" y="361" width="1" height="1" fill="#6A98E8"/><rect x="15" y="353" width="1" height="1" fill="#505050"/><rect x="15" y="361" width="1" height="1" fill="#505050"/><rect x="16" y="353" width="1" height="1" fill="#6A98E8"/><rect x="16" y="361" width="1" height="1" fill="#6A98E8"/><rect x="17" y="353" width="1" height="1" fill="#505050"/><rect x="17" y="361" width="1" height="1" fill="#505050"/><rect x="18" y="353" width="1" height="1" fill="#6A98E8"/><rect x="18" y="361" width="1" height="1" fill="#6A98E8"/><rect x="19" y="353" width="1" height="1" fill="#505050"/><rect x="19" y="361" width="1" height="1" fill="#505050"/><rect x="20" y="353" width="1" height="1" fill="#6A98E8"/><rect x="20" y="361" width="1" height="1" fill="#6A98E8"/><rect x="10" y="354" width="1" height="1" fill="#6A98E8"/><rect x="21" y="354" width="1" height="1" fill="#6A98E8"/><rect x="10" y="355" width="1" height="1" fill="#505050"/><rect x="21" y="355" width="1" height="1" fill="#505050"/><rect x="10" y="356" width="1" height="1" fill="#6A98E8"/><rect x="21" y="356" width="1" height="1" fill="#6A98E8"/><rect x="10" y="357" width="1" height="1" fill="#505050"/><rect x="21" y="357" width="1" height="1" fill="#505050"/><rect x="10" y="358" width="1" height="1" fill="#6A98E8"/><rect x="21" y="358" width="1" height="1" fill="#6A98E8"/><rect x="10" y="359" width="1" height="1" fill="#505050"/><rect x="21" y="359" width="1" height="1" fill="#505050"/><rect x="10" y="360" width="1" height="1" fill="#6A98E8"/><rect x="21" y="360" width="1" height="1" fill="#6A98E8"/><rect x="11" y="354" width="2" height="1" fill="#fff"/><rect x="19" y="354" width="1" height="1" fill="#6A98E8"/><rect x="18" y="355" width="1" height="1" fill="#6A98E8"/><rect x="20" y="355" width="1" height="1" fill="#6A98E8"/><rect x="17" y="356" width="1" height="1" fill="#6A98E8"/><rect x="19" y="356" width="1" height="1" fill="#6A98E8"/><rect x="16" y="357" width="1" height="1" fill="#6A98E8"/><rect x="18" y="357" width="1" height="1" fill="#6A98E8"/><rect x="20" y="357" width="1" height="1" fill="#6A98E8"/><rect x="15" y="358" width="1" height="1" fill="#6A98E8"/><rect x="17" y="358" width="1" height="1" fill="#6A98E8"/><rect x="19" y="358" width="1" height="1" fill="#6A98E8"/><rect x="14" y="359" width="1" height="1" fill="#6A98E8"/><rect x="16" y="359" width="1" height="1" fill="#6A98E8"/><rect x="18" y="359" width="1" height="1" fill="#6A98E8"/><rect x="20" y="359" width="1" height="1" fill="#6A98E8"/><rect x="13" y="360" width="1" height="1" fill="#6A98E8"/><rect x="15" y="360" width="1" height="1" fill="#6A98E8"/><rect x="17" y="360" width="1" height="1" fill="#6A98E8"/><rect x="19" y="360" width="1" height="1" fill="#6A98E8"/><rect x="11" y="371" width="10" height="7" fill="#DAD6CE"/><rect x="11" y="370" width="1" height="1" fill="#505050"/><rect x="11" y="378" width="1" height="1" fill="#505050"/><rect x="12" y="370" width="1" height="1" fill="#6A98E8"/><rect x="12" y="378" width="1" height="1" fill="#6A98E8"/><rect x="13" y="370" width="1" height="1" fill="#505050"/><rect x="13" y="378" width="1" height="1" fill="#505050"/><rect x="14" y="370" width="1" height="1" fill="#6A98E8"/><rect x="14" y="378" width="1" height="1" fill="#6A98E8"/><rect x="15" y="370" width="1" height="1" fill="#505050"/><rect x="15" y="378" width="1" height="1" fill="#505050"/><rect x="16" y="370" width="1" height="1" fill="#6A98E8"/><rect x="16" y="378" width="1" height="1" fill="#6A98E8"/><rect x="17" y="370" width="1" height="1" fill="#505050"/><rect x="17" y="378" width="1" height="1" fill="#505050"/><rect x="18" y="370" width="1" height="1" fill="#6A98E8"/><rect x="18" y="378" width="1" height="1" fill="#6A98E8"/><rect x="19" y="370" width="1" height="1" fill="#505050"/><rect x="19" y="378" width="1" height="1" fill="#505050"/><rect x="20" y="370" width="1" height="1" fill="#6A98E8"/><rect x="20" y="378" width="1" height="1" fill="#6A98E8"/><rect x="10" y="371" width="1" height="1" fill="#6A98E8"/><rect x="21" y="371" width="1" height="1" fill="#6A98E8"/><rect x="10" y="372" width="1" height="1" fill="#505050"/><rect x="21" y="372" width="1" height="1" fill="#505050"/><rect x="10" y="373" width="1" height="1" fill="#6A98E8"/><rect x="21" y="373" width="1" height="1" fill="#6A98E8"/><rect x="10" y="374" width="1" height="1" fill="#505050"/><rect x="21" y="374" width="1" height="1" fill="#505050"/><rect x="10" y="375" width="1" height="1" fill="#6A98E8"/><rect x="21" y="375" width="1" height="1" fill="#6A98E8"/><rect x="10" y="376" width="1" height="1" fill="#505050"/><rect x="21" y="376" width="1" height="1" fill="#505050"/><rect x="10" y="377" width="1" height="1" fill="#6A98E8"/><rect x="21" y="377" width="1" height="1" fill="#6A98E8"/><rect x="11" y="371" width="2" height="1" fill="#fff"/><rect x="19" y="371" width="1" height="1" fill="#6A98E8"/><rect x="18" y="372" width="1" height="1" fill="#6A98E8"/><rect x="20" y="372" width="1" height="1" fill="#6A98E8"/><rect x="17" y="373" width="1" height="1" fill="#6A98E8"/><rect x="19" y="373" width="1" height="1" fill="#6A98E8"/><rect x="16" y="374" width="1" height="1" fill="#6A98E8"/><rect x="18" y="374" width="1" height="1" fill="#6A98E8"/><rect x="20" y="374" width="1" height="1" fill="#6A98E8"/><rect x="15" y="375" width="1" height="1" fill="#6A98E8"/><rect x="17" y="375" width="1" height="1" fill="#6A98E8"/><rect x="19" y="375" width="1" height="1" fill="#6A98E8"/><rect x="14" y="376" width="1" height="1" fill="#6A98E8"/><rect x="16" y="376" width="1" height="1" fill="#6A98E8"/><rect x="18" y="376" width="1" height="1" fill="#6A98E8"/><rect x="20" y="376" width="1" height="1" fill="#6A98E8"/><rect x="13" y="377" width="1" height="1" fill="#6A98E8"/><rect x="15" y="377" width="1" height="1" fill="#6A98E8"/><rect x="17" y="377" width="1" height="1" fill="#6A98E8"/><rect x="19" y="377" width="1" height="1" fill="#6A98E8"/><rect x="11" y="388" width="10" height="7" fill="#DAD6CE"/><rect x="11" y="387" width="1" height="1" fill="#505050"/><rect x="11" y="395" width="1" height="1" fill="#505050"/><rect x="12" y="387" width="1" height="1" fill="#6A98E8"/><rect x="12" y="395" width="1" height="1" fill="#6A98E8"/><rect x="13" y="387" width="1" height="1" fill="#505050"/><rect x="13" y="395" width="1" height="1" fill="#505050"/><rect x="14" y="387" width="1" height="1" fill="#6A98E8"/><rect x="14" y="395" width="1" height="1" fill="#6A98E8"/><rect x="15" y="387" width="1" height="1" fill="#505050"/><rect x="15" y="395" width="1" height="1" fill="#505050"/><rect x="16" y="387" width="1" height="1" fill="#6A98E8"/><rect x="16" y="395" width="1" height="1" fill="#6A98E8"/><rect x="17" y="387" width="1" height="1" fill="#505050"/><rect x="17" y="395" width="1" height="1" fill="#505050"/><rect x="18" y="387" width="1" height="1" fill="#6A98E8"/><rect x="18" y="395" width="1" height="1" fill="#6A98E8"/><rect x="19" y="387" width="1" height="1" fill="#505050"/><rect x="19" y="395" width="1" height="1" fill="#505050"/><rect x="20" y="387" width="1" height="1" fill="#6A98E8"/><rect x="20" y="395" width="1" height="1" fill="#6A98E8"/><rect x="10" y="388" width="1" height="1" fill="#6A98E8"/><rect x="21" y="388" width="1" height="1" fill="#6A98E8"/><rect x="10" y="389" width="1" height="1" fill="#505050"/><rect x="21" y="389" width="1" height="1" fill="#505050"/><rect x="10" y="390" width="1" height="1" fill="#6A98E8"/><rect x="21" y="390" width="1" height="1" fill="#6A98E8"/><rect x="10" y="391" width="1" height="1" fill="#505050"/><rect x="21" y="391" width="1" height="1" fill="#505050"/><rect x="10" y="392" width="1" height="1" fill="#6A98E8"/><rect x="21" y="392" width="1" height="1" fill="#6A98E8"/><rect x="10" y="393" width="1" height="1" fill="#505050"/><rect x="21" y="393" width="1" height="1" fill="#505050"/><rect x="10" y="394" width="1" height="1" fill="#6A98E8"/><rect x="21" y="394" width="1" height="1" fill="#6A98E8"/><rect x="11" y="388" width="2" height="1" fill="#fff"/><rect x="19" y="388" width="1" height="1" fill="#6A98E8"/><rect x="18" y="389" width="1" height="1" fill="#6A98E8"/><rect x="20" y="389" width="1" height="1" fill="#6A98E8"/><rect x="17" y="390" width="1" height="1" fill="#6A98E8"/><rect x="19" y="390" width="1" height="1" fill="#6A98E8"/><rect x="16" y="391" width="1" height="1" fill="#6A98E8"/><rect x="18" y="391" width="1" height="1" fill="#6A98E8"/><rect x="20" y="391" width="1" height="1" fill="#6A98E8"/><rect x="15" y="392" width="1" height="1" fill="#6A98E8"/><rect x="17" y="392" width="1" height="1" fill="#6A98E8"/><rect x="19" y="392" width="1" height="1" fill="#6A98E8"/><rect x="14" y="393" width="1" height="1" fill="#6A98E8"/><rect x="16" y="393" width="1" height="1" fill="#6A98E8"/><rect x="18" y="393" width="1" height="1" fill="#6A98E8"/><rect x="20" y="393" width="1" height="1" fill="#6A98E8"/><rect x="13" y="394" width="1" height="1" fill="#6A98E8"/><rect x="15" y="394" width="1" height="1" fill="#6A98E8"/><rect x="17" y="394" width="1" height="1" fill="#6A98E8"/><rect x="19" y="394" width="1" height="1" fill="#6A98E8"/><rect x="11" y="405" width="10" height="7" fill="#DAD6CE"/><rect x="11" y="404" width="1" height="1" fill="#505050"/><rect x="11" y="412" width="1" height="1" fill="#505050"/><rect x="12" y="404" width="1" height="1" fill="#6A98E8"/><rect x="12" y="412" width="1" height="1" fill="#6A98E8"/><rect x="13" y="404" width="1" height="1" fill="#505050"/><rect x="13" y="412" width="1" height="1" fill="#505050"/><rect x="14" y="404" width="1" height="1" fill="#6A98E8"/><rect x="14" y="412" width="1" height="1" fill="#6A98E8"/><rect x="15" y="404" width="1" height="1" fill="#505050"/><rect x="15" y="412" width="1" height="1" fill="#505050"/><rect x="16" y="404" width="1" height="1" fill="#6A98E8"/><rect x="16" y="412" width="1" height="1" fill="#6A98E8"/><rect x="17" y="404" width="1" height="1" fill="#505050"/><rect x="17" y="412" width="1" height="1" fill="#505050"/><rect x="18" y="404" width="1" height="1" fill="#6A98E8"/><rect x="18" y="412" width="1" height="1" fill="#6A98E8"/><rect x="19" y="404" width="1" height="1" fill="#505050"/><rect x="19" y="412" width="1" height="1" fill="#505050"/><rect x="20" y="404" width="1" height="1" fill="#6A98E8"/><rect x="20" y="412" width="1" height="1" fill="#6A98E8"/><rect x="10" y="405" width="1" height="1" fill="#6A98E8"/><rect x="21" y="405" width="1" height="1" fill="#6A98E8"/><rect x="10" y="406" width="1" height="1" fill="#505050"/><rect x="21" y="406" width="1" height="1" fill="#505050"/><rect x="10" y="407" width="1" height="1" fill="#6A98E8"/><rect x="21" y="407" width="1" height="1" fill="#6A98E8"/><rect x="10" y="408" width="1" height="1" fill="#505050"/><rect x="21" y="408" width="1" height="1" fill="#505050"/><rect x="10" y="409" width="1" height="1" fill="#6A98E8"/><rect x="21" y="409" width="1" height="1" fill="#6A98E8"/><rect x="10" y="410" width="1" height="1" fill="#505050"/><rect x="21" y="410" width="1" height="1" fill="#505050"/><rect x="10" y="411" width="1" height="1" fill="#6A98E8"/><rect x="21" y="411" width="1" height="1" fill="#6A98E8"/><rect x="11" y="405" width="2" height="1" fill="#fff"/><rect x="19" y="405" width="1" height="1" fill="#6A98E8"/><rect x="18" y="406" width="1" height="1" fill="#6A98E8"/><rect x="20" y="406" width="1" height="1" fill="#6A98E8"/><rect x="17" y="407" width="1" height="1" fill="#6A98E8"/><rect x="19" y="407" width="1" height="1" fill="#6A98E8"/><rect x="16" y="408" width="1" height="1" fill="#6A98E8"/><rect x="18" y="408" width="1" height="1" fill="#6A98E8"/><rect x="20" y="408" width="1" height="1" fill="#6A98E8"/><rect x="15" y="409" width="1" height="1" fill="#6A98E8"/><rect x="17" y="409" width="1" height="1" fill="#6A98E8"/><rect x="19" y="409" width="1" height="1" fill="#6A98E8"/><rect x="14" y="410" width="1" height="1" fill="#6A98E8"/><rect x="16" y="410" width="1" height="1" fill="#6A98E8"/><rect x="18" y="410" width="1" height="1" fill="#6A98E8"/><rect x="20" y="410" width="1" height="1" fill="#6A98E8"/><rect x="13" y="411" width="1" height="1" fill="#6A98E8"/><rect x="15" y="411" width="1" height="1" fill="#6A98E8"/><rect x="17" y="411" width="1" height="1" fill="#6A98E8"/><rect x="19" y="411" width="1" height="1" fill="#6A98E8"/><rect x="11" y="422" width="10" height="7" fill="#DAD6CE"/><rect x="11" y="421" width="1" height="1" fill="#505050"/><rect x="11" y="429" width="1" height="1" fill="#505050"/><rect x="12" y="421" width="1" height="1" fill="#6A98E8"/><rect x="12" y="429" width="1" height="1" fill="#6A98E8"/><rect x="13" y="421" width="1" height="1" fill="#505050"/><rect x="13" y="429" width="1" height="1" fill="#505050"/><rect x="14" y="421" width="1" height="1" fill="#6A98E8"/><rect x="14" y="429" width="1" height="1" fill="#6A98E8"/><rect x="15" y="421" width="1" height="1" fill="#505050"/><rect x="15" y="429" width="1" height="1" fill="#505050"/><rect x="16" y="421" width="1" height="1" fill="#6A98E8"/><rect x="16" y="429" width="1" height="1" fill="#6A98E8"/><rect x="17" y="421" width="1" height="1" fill="#505050"/><rect x="17" y="429" width="1" height="1" fill="#505050"/><rect x="18" y="421" width="1" height="1" fill="#6A98E8"/><rect x="18" y="429" width="1" height="1" fill="#6A98E8"/><rect x="19" y="421" width="1" height="1" fill="#505050"/><rect x="19" y="429" width="1" height="1" fill="#505050"/><rect x="20" y="421" width="1" height="1" fill="#6A98E8"/><rect x="20" y="429" width="1" height="1" fill="#6A98E8"/><rect x="10" y="422" width="1" height="1" fill="#6A98E8"/><rect x="21" y="422" width="1" height="1" fill="#6A98E8"/><rect x="10" y="423" width="1" height="1" fill="#505050"/><rect x="21" y="423" width="1" height="1" fill="#505050"/><rect x="10" y="424" width="1" height="1" fill="#6A98E8"/><rect x="21" y="424" width="1" height="1" fill="#6A98E8"/><rect x="10" y="425" width="1" height="1" fill="#505050"/><rect x="21" y="425" width="1" height="1" fill="#505050"/><rect x="10" y="426" width="1" height="1" fill="#6A98E8"/><rect x="21" y="426" width="1" height="1" fill="#6A98E8"/><rect x="10" y="427" width="1" height="1" fill="#505050"/><rect x="21" y="427" width="1" height="1" fill="#505050"/><rect x="10" y="428" width="1" height="1" fill="#6A98E8"/><rect x="21" y="428" width="1" height="1" fill="#6A98E8"/><rect x="11" y="422" width="2" height="1" fill="#fff"/><rect x="19" y="422" width="1" height="1" fill="#6A98E8"/><rect x="18" y="423" width="1" height="1" fill="#6A98E8"/><rect x="20" y="423" width="1" height="1" fill="#6A98E8"/><rect x="17" y="424" width="1" height="1" fill="#6A98E8"/><rect x="19" y="424" width="1" height="1" fill="#6A98E8"/><rect x="16" y="425" width="1" height="1" fill="#6A98E8"/><rect x="18" y="425" width="1" height="1" fill="#6A98E8"/><rect x="20" y="425" width="1" height="1" fill="#6A98E8"/><rect x="15" y="426" width="1" height="1" fill="#6A98E8"/><rect x="17" y="426" width="1" height="1" fill="#6A98E8"/><rect x="19" y="426" width="1" height="1" fill="#6A98E8"/><rect x="14" y="427" width="1" height="1" fill="#6A98E8"/><rect x="16" y="427" width="1" height="1" fill="#6A98E8"/><rect x="18" y="427" width="1" height="1" fill="#6A98E8"/><rect x="20" y="427" width="1" height="1" fill="#6A98E8"/><rect x="13" y="428" width="1" height="1" fill="#6A98E8"/><rect x="15" y="428" width="1" height="1" fill="#6A98E8"/><rect x="17" y="428" width="1" height="1" fill="#6A98E8"/><rect x="19" y="428" width="1" height="1" fill="#6A98E8"/><circle cx="14.5" cy="448.5" r="4.9" fill="#fff" stroke="#3F68C0" stroke-width="1.3"/><rect x="14" y="444" width="1" height="5" fill="#000"/><rect x="14" y="448" width="4" height="1" fill="#000"/><rect x="944" y="444" width="1" height="1" fill="#fff"/><rect x="943" y="445" width="1" height="1" fill="#fff"/><rect x="944" y="445" width="1" height="1" fill="#808080"/><rect x="942" y="446" width="1" height="1" fill="#fff"/><rect x="943" y="446" width="1" height="1" fill="#808080"/><rect x="944" y="446" width="1" height="1" fill="#808080"/><rect x="941" y="447" width="1" height="1" fill="#fff"/><rect x="942" y="447" width="1" height="1" fill="#808080"/><rect x="943" y="447" width="1" height="1" fill="#808080"/><rect x="940" y="448" width="1" height="1" fill="#fff"/><rect x="941" y="448" width="1" height="1" fill="#808080"/><rect x="942" y="448" width="1" height="1" fill="#808080"/><rect x="944" y="448" width="1" height="1" fill="#fff"/><rect x="939" y="449" width="1" height="1" fill="#fff"/><rect x="940" y="449" width="1" height="1" fill="#808080"/><rect x="941" y="449" width="1" height="1" fill="#808080"/><rect x="943" y="449" width="1" height="1" fill="#fff"/><rect x="944" y="449" width="1" height="1" fill="#808080"/><rect x="938" y="450" width="1" height="1" fill="#fff"/><rect x="939" y="450" width="1" height="1" fill="#808080"/><rect x="940" y="450" width="1" height="1" fill="#808080"/><rect x="942" y="450" width="1" height="1" fill="#fff"/><rect x="943" y="450" width="1" height="1" fill="#808080"/><rect x="944" y="450" width="1" height="1" fill="#808080"/><rect x="937" y="451" width="1" height="1" fill="#fff"/><rect x="938" y="451" width="1" height="1" fill="#808080"/><rect x="939" y="451" width="1" height="1" fill="#808080"/><rect x="941" y="451" width="1" height="1" fill="#fff"/><rect x="942" y="451" width="1" height="1" fill="#808080"/><rect x="943" y="451" width="1" height="1" fill="#808080"/><rect x="936" y="452" width="1" height="1" fill="#fff"/><rect x="937" y="452" width="1" height="1" fill="#808080"/><rect x="938" y="452" width="1" height="1" fill="#808080"/><rect x="940" y="452" width="1" height="1" fill="#fff"/><rect x="941" y="452" width="1" height="1" fill="#808080"/><rect x="942" y="452" width="1" height="1" fill="#808080"/><rect x="944" y="452" width="1" height="1" fill="#fff"/><rect x="935" y="453" width="1" height="1" fill="#fff"/><rect x="936" y="453" width="1" height="1" fill="#808080"/><rect x="937" y="453" width="1" height="1" fill="#808080"/><rect x="939" y="453" width="1" height="1" fill="#fff"/><rect x="940" y="453" width="1" height="1" fill="#808080"/><rect x="941" y="453" width="1" height="1" fill="#808080"/><rect x="943" y="453" width="1" height="1" fill="#fff"/><rect x="944" y="453" width="1" height="1" fill="#808080"/><rect x="934" y="454" width="1" height="1" fill="#fff"/><rect x="935" y="454" width="1" height="1" fill="#808080"/><rect x="936" y="454" width="1" height="1" fill="#808080"/><rect x="938" y="454" width="1" height="1" fill="#fff"/><rect x="939" y="454" width="1" height="1" fill="#808080"/><rect x="940" y="454" width="1" height="1" fill="#808080"/><rect x="942" y="454" width="1" height="1" fill="#fff"/><rect x="943" y="454" width="1" height="1" fill="#808080"/><rect x="944" y="454" width="1" height="1" fill="#808080"/><rect x="933" y="455" width="1" height="1" fill="#fff"/><rect x="934" y="455" width="1" height="1" fill="#808080"/><rect x="935" y="455" width="1" height="1" fill="#808080"/><rect x="937" y="455" width="1" height="1" fill="#fff"/><rect x="938" y="455" width="1" height="1" fill="#808080"/><rect x="939" y="455" width="1" height="1" fill="#808080"/><rect x="941" y="455" width="1" height="1" fill="#fff"/><rect x="942" y="455" width="1" height="1" fill="#808080"/><rect x="943" y="455" width="1" height="1" fill="#808080"/></svg>
<svg width="0" height="0" style="position:absolute"><filter id="aa" x="0" y="0" width="100%" height="100%"><feComponentTransfer><feFuncA type="discrete" tableValues="0 0 0 0 0 0 0 0 0 1 1 1 1 1 1 1 1 1 1 1"/></feComponentTransfer></filter></svg>
<div style="left:0;top:0;width:950px;height:461px;filter:url(#aa)">
<p style="left:24px;top:6px;letter-spacing:0.286px;color:#fff;font-weight:bold">CodeSite Viewer</p>
<p style="left:9px;top:25px;">File</p>
<p style="left:37px;top:25px;">Edit</p>
<p style="left:66px;top:25px;">Search</p>
<p style="left:113px;top:25px;">View</p>
<p style="left:147px;top:25px;">Tools</p>
<p style="left:182px;top:25px;">Help</p>
<p style="left:10px;top:80px;letter-spacing:0.833px;">Message</p>
<p style="left:247px;top:80px;letter-spacing:1.143px;">Category</p>
<p style="left:319px;top:80px;letter-spacing:1.0px;">AppName</p>
<p style="left:389px;top:80px;letter-spacing:1.286px;">Computer</p>
<p style="left:474px;top:80px;letter-spacing:1.5px;">PID</p>
<p style="left:525px;top:80px;letter-spacing:2.0px;">TID</p>
<p style="left:593px;top:80px;letter-spacing:1.333px;">Date</p>
<p style="left:637px;top:80px;letter-spacing:1.111px;">Time Stamp</p>
<p style="left:31px;top:94px;letter-spacing:1.0px;color:#000">TestCS</p>
<p style="left:318px;top:94px;letter-spacing:1.286px;color:#000">ibserver</p>
<p style="left:381px;top:94px;letter-spacing:0.571px;color:#000">BOOFHEAD</p>
<p style="left:478px;top:94px;letter-spacing:1.0px;color:#000">868</p>
<p style="left:526px;top:94px;letter-spacing:1.5px;color:#000">552</p>
<p style="left:556px;top:94px;letter-spacing:1.222px;color:#000">21/08/2001</p>
<p style="left:630px;top:94px;letter-spacing:1.182px;color:#000">10:47:37.984</p>
<p style="left:54px;top:109px;letter-spacing:1.077px;color:#000">IBSite Test: Check Point #1</p>
<p style="left:247px;top:109px;letter-spacing:1.1px;color:#000">IBSite Test</p>
<p style="left:318px;top:109px;letter-spacing:1.286px;color:#000">ibserver</p>
<p style="left:381px;top:109px;letter-spacing:0.571px;color:#000">BOOFHEAD</p>
<p style="left:478px;top:109px;letter-spacing:1.0px;color:#000">868</p>
<p style="left:526px;top:109px;letter-spacing:1.5px;color:#000">552</p>
<p style="left:556px;top:109px;letter-spacing:1.222px;color:#000">21/08/2001</p>
<p style="left:630px;top:109px;letter-spacing:1.182px;color:#000">10:47:37.984</p>
<p style="left:54px;top:124px;letter-spacing:1.077px;color:#000">IBSite Test: Check Point #1</p>
<p style="left:247px;top:124px;letter-spacing:1.1px;color:#000">IBSite Test</p>
<p style="left:318px;top:124px;letter-spacing:1.286px;color:#000">ibserver</p>
<p style="left:381px;top:124px;letter-spacing:0.571px;color:#000">BOOFHEAD</p>
<p style="left:478px;top:124px;letter-spacing:1.0px;color:#000">868</p>
<p style="left:526px;top:124px;letter-spacing:1.5px;color:#000">552</p>
<p style="left:556px;top:124px;letter-spacing:1.222px;color:#000">21/08/2001</p>
<p style="left:630px;top:124px;letter-spacing:1.182px;color:#000">10:47:37.984</p>
<p style="left:54px;top:154px;letter-spacing:1.0px;color:#fff">Memory Status</p>
<p style="left:247px;top:154px;letter-spacing:1.1px;color:#fff">IBSite Test</p>
<p style="left:318px;top:154px;letter-spacing:1.286px;color:#fff">ibserver</p>
<p style="left:381px;top:154px;letter-spacing:0.571px;color:#fff">BOOFHEAD</p>
<p style="left:478px;top:154px;letter-spacing:1.0px;color:#fff">868</p>
<p style="left:526px;top:154px;letter-spacing:1.5px;color:#fff">552</p>
<p style="left:556px;top:154px;letter-spacing:1.222px;color:#fff">21/08/2001</p>
<p style="left:630px;top:154px;letter-spacing:1.182px;color:#fff">10:47:37.994</p>
<p style="left:54px;top:169px;letter-spacing:1.0px;color:#000">Msg</p>
<p style="left:247px;top:169px;letter-spacing:1.1px;color:#000">IBSite Test</p>
<p style="left:318px;top:169px;letter-spacing:1.286px;color:#000">ibserver</p>
<p style="left:381px;top:169px;letter-spacing:0.571px;color:#000">BOOFHEAD</p>
<p style="left:478px;top:169px;letter-spacing:1.0px;color:#000">868</p>
<p style="left:526px;top:169px;letter-spacing:1.5px;color:#000">552</p>
<p style="left:556px;top:169px;letter-spacing:1.222px;color:#000">21/08/2001</p>
<p style="left:630px;top:169px;letter-spacing:1.182px;color:#000">10:47:37.994</p>
<p style="left:54px;top:184px;letter-spacing:0.913px;color:#000">CodeSite Already Enabled</p>
<p style="left:247px;top:184px;letter-spacing:1.1px;color:#000">IBSite Test</p>
<p style="left:318px;top:184px;letter-spacing:1.286px;color:#000">ibserver</p>
<p style="left:381px;top:184px;letter-spacing:0.571px;color:#000">BOOFHEAD</p>
<p style="left:478px;top:184px;letter-spacing:1.0px;color:#000">868</p>
<p style="left:526px;top:184px;letter-spacing:1.5px;color:#000">552</p>
<p style="left:556px;top:184px;letter-spacing:1.222px;color:#000">21/08/2001</p>
<p style="left:630px;top:184px;letter-spacing:1.182px;color:#000">10:47:37.994</p>
<p style="left:54px;top:199px;letter-spacing:0.857px;color:#000">Should see this</p>
<p style="left:247px;top:199px;letter-spacing:1.1px;color:#000">IBSite Test</p>
<p style="left:318px;top:199px;letter-spacing:1.286px;color:#000">ibserver</p>
<p style="left:381px;top:199px;letter-spacing:0.571px;color:#000">BOOFHEAD</p>
<p style="left:478px;top:199px;letter-spacing:1.0px;color:#000">868</p>
<p style="left:526px;top:199px;letter-spacing:1.5px;color:#000">552</p>
<p style="left:556px;top:199px;letter-spacing:1.222px;color:#000">21/08/2001</p>
<p style="left:630px;top:199px;letter-spacing:1.182px;color:#000">10:47:37.994</p>
<p style="left:54px;top:214px;letter-spacing:1.2px;color:#000">String = 'Value'</p>
<p style="left:247px;top:214px;letter-spacing:1.1px;color:#000">IBSite Test</p>
<p style="left:318px;top:214px;letter-spacing:1.286px;color:#000">ibserver</p>
<p style="left:381px;top:214px;letter-spacing:0.571px;color:#000">BOOFHEAD</p>
<p style="left:478px;top:214px;letter-spacing:1.0px;color:#000">868</p>
<p style="left:526px;top:214px;letter-spacing:1.5px;color:#000">552</p>
<p style="left:556px;top:214px;letter-spacing:1.222px;color:#000">21/08/2001</p>
<p style="left:630px;top:214px;letter-spacing:1.182px;color:#000">10:47:37.994</p>
<p style="left:54px;top:229px;letter-spacing:1.4px;color:#000">Integer = 1</p>
<p style="left:247px;top:229px;letter-spacing:1.1px;color:#000">IBSite Test</p>
<p style="left:318px;top:229px;letter-spacing:1.286px;color:#000">ibserver</p>
<p style="left:381px;top:229px;letter-spacing:0.571px;color:#000">BOOFHEAD</p>
<p style="left:478px;top:229px;letter-spacing:1.0px;color:#000">868</p>
<p style="left:526px;top:229px;letter-spacing:1.5px;color:#000">552</p>
<p style="left:556px;top:229px;letter-spacing:1.222px;color:#000">21/08/2001</p>
<p style="left:630px;top:229px;letter-spacing:1.182px;color:#000">10:47:37.994</p>
<p style="left:54px;top:244px;letter-spacing:1.0px;color:#000">Float = 1.10</p>
<p style="left:247px;top:244px;letter-spacing:1.1px;color:#000">IBSite Test</p>
<p style="left:318px;top:244px;letter-spacing:1.286px;color:#000">ibserver</p>
<p style="left:381px;top:244px;letter-spacing:0.571px;color:#000">BOOFHEAD</p>
<p style="left:478px;top:244px;letter-spacing:1.0px;color:#000">868</p>
<p style="left:526px;top:244px;letter-spacing:1.5px;color:#000">552</p>
<p style="left:556px;top:244px;letter-spacing:1.222px;color:#000">21/08/2001</p>
<p style="left:630px;top:244px;letter-spacing:1.182px;color:#000">10:47:37.994</p>
<p style="left:55px;top:259px;letter-spacing:0.778px;color:#000">This is a test note</p>
<p style="left:247px;top:259px;letter-spacing:1.1px;color:#000">IBSite Test</p>
<p style="left:318px;top:259px;letter-spacing:1.286px;color:#000">ibserver</p>
<p style="left:381px;top:259px;letter-spacing:0.571px;color:#000">BOOFHEAD</p>
<p style="left:478px;top:259px;letter-spacing:1.0px;color:#000">868</p>
<p style="left:526px;top:259px;letter-spacing:1.5px;color:#000">552</p>
<p style="left:556px;top:259px;letter-spacing:1.222px;color:#000">21/08/2001</p>
<p style="left:630px;top:259px;letter-spacing:1.182px;color:#000">10:47:37.994</p>
<p style="left:31px;top:274px;letter-spacing:1.0px;color:#000">TestCS</p>
<p style="left:247px;top:274px;letter-spacing:1.1px;color:#000">IBSite Test</p>
<p style="left:318px;top:274px;letter-spacing:1.286px;color:#000">ibserver</p>
<p style="left:381px;top:274px;letter-spacing:0.571px;color:#000">BOOFHEAD</p>
<p style="left:478px;top:274px;letter-spacing:1.0px;color:#000">868</p>
<p style="left:526px;top:274px;letter-spacing:1.5px;color:#000">552</p>
<p style="left:556px;top:274px;letter-spacing:1.222px;color:#000">21/08/2001</p>
<p style="left:630px;top:274px;letter-spacing:1.182px;color:#000">10:47:37.994</p>
<p style="left:723px;top:80px;letter-spacing:1.0px;">Statistic</p>
<p style="left:911px;top:80px;letter-spacing:0.75px;">Value</p>
<p style="left:721px;top:95px;letter-spacing:1.0px;color:#fff">Heap Status</p>
<p style="left:722px;top:111px;letter-spacing:0.944px;">Total Address Space</p>
<p style="left:883px;top:111px;letter-spacing:1.125px;color:#0A246A;">1,048,576</p>
<p style="left:722px;top:127px;letter-spacing:1.062px;">Total Uncommitted</p>
<p style="left:883px;top:127px;letter-spacing:1.125px;color:#0A246A;">1,032,192</p>
<p style="left:722px;top:143px;letter-spacing:1.143px;">Total Committed</p>
<p style="left:901px;top:143px;letter-spacing:1.2px;color:#0A246A;">16,384</p>
<p style="left:722px;top:159px;letter-spacing:1.0px;">Total Allocated</p>
<p style="left:908px;top:159px;letter-spacing:1.25px;color:#0A246A;">2,980</p>
<p style="left:722px;top:175px;letter-spacing:1.0px;">TotalFree</p>
<p style="left:901px;top:175px;letter-spacing:1.2px;color:#0A246A;">12,928</p>
<p style="left:721px;top:191px;letter-spacing:1.125px;">FreeSmall</p>
<p style="left:919px;top:191px;letter-spacing:1.5px;color:#0A246A;">188</p>
<p style="left:721px;top:207px;letter-spacing:1.0px;">FreeBig</p>
<p style="left:934px;top:207px;color:#0A246A;">0</p>
<p style="left:721px;top:223px;letter-spacing:1.2px;">Unused</p>
<p style="left:901px;top:223px;letter-spacing:1.2px;color:#0A246A;">12,740</p>
<p style="left:721px;top:239px;letter-spacing:1.286px;">Overhead</p>
<p style="left:920px;top:239px;letter-spacing:1.0px;color:#0A246A;">476</p>
<p style="left:721px;top:255px;letter-spacing:1.0px;">Heap Error Code</p>
<p style="left:934px;top:255px;color:#0A246A;">0</p>
<p style="left:721px;top:287px;letter-spacing:0.947px;">Global Memory Status</p>
<p style="left:721px;top:303px;letter-spacing:1.1px;">Memory Load</p>
<p style="left:917px;top:303px;letter-spacing:0.9px;color:#0A246A;">77%</p>
<p style="left:722px;top:319px;letter-spacing:0.9px;">Total Physical Memory</p>
<p style="left:869px;top:319px;letter-spacing:1.0px;color:#0A246A;">167,231,488</p>
<p style="left:722px;top:335px;letter-spacing:0.9px;">Avail Physical Memory</p>
<p style="left:876px;top:335px;letter-spacing:1.0px;color:#0A246A;">37,736,448</p>
<p style="left:722px;top:351px;letter-spacing:0.714px;">Total Page File</p>
<p style="left:870px;top:351px;letter-spacing:0.9px;color:#0A246A;">400,674,816</p>
<p style="left:722px;top:367px;letter-spacing:0.643px;">Avail Page File</p>
<p style="left:869px;top:367px;letter-spacing:1.0px;color:#0A246A;">245,186,560</p>
<p style="left:722px;top:383px;letter-spacing:0.947px;">Total Virtual Memory</p>
<p style="left:858px;top:383px;letter-spacing:1.0px;color:#0A246A;">2,147,352,576</p>
<p style="left:722px;top:399px;letter-spacing:0.947px;">Avail Virtual Memory</p>
<p style="left:858px;top:399px;letter-spacing:1.0px;color:#0A246A;">2,099,453,952</p>
<p style="left:29px;top:350px;letter-spacing:0.75px;">First</p>
<p style="left:82px;top:350px;letter-spacing:1.4px;color:#fff">Integer = 1</p>
<p style="left:29px;top:367px;letter-spacing:1.0px;">Second</p>
<p style="left:82px;top:367px;letter-spacing:1.0px;">Float = 1.10</p>
<p style="left:30px;top:384px;letter-spacing:1.0px;">Third</p>
<p style="left:82px;top:384px;letter-spacing:1.154px;">String = Value</p>
<p style="left:29px;top:401px;letter-spacing:1.0px;">Fourth</p>
<p style="left:82px;top:401px;letter-spacing:1.0px;">Msg</p>
<p style="left:25px;top:442px;letter-spacing:0.2px;">0:00:00.010</p>
<p style="left:108px;top:442px;letter-spacing:1.0px;">#5</p>
<p style="left:131px;top:442px;letter-spacing:-0.05px;">13 out of 13 Messages</p>
<p style="left:251px;top:442px;letter-spacing:-0.222px;">1 Selected</p>
</div>
</body></html>
